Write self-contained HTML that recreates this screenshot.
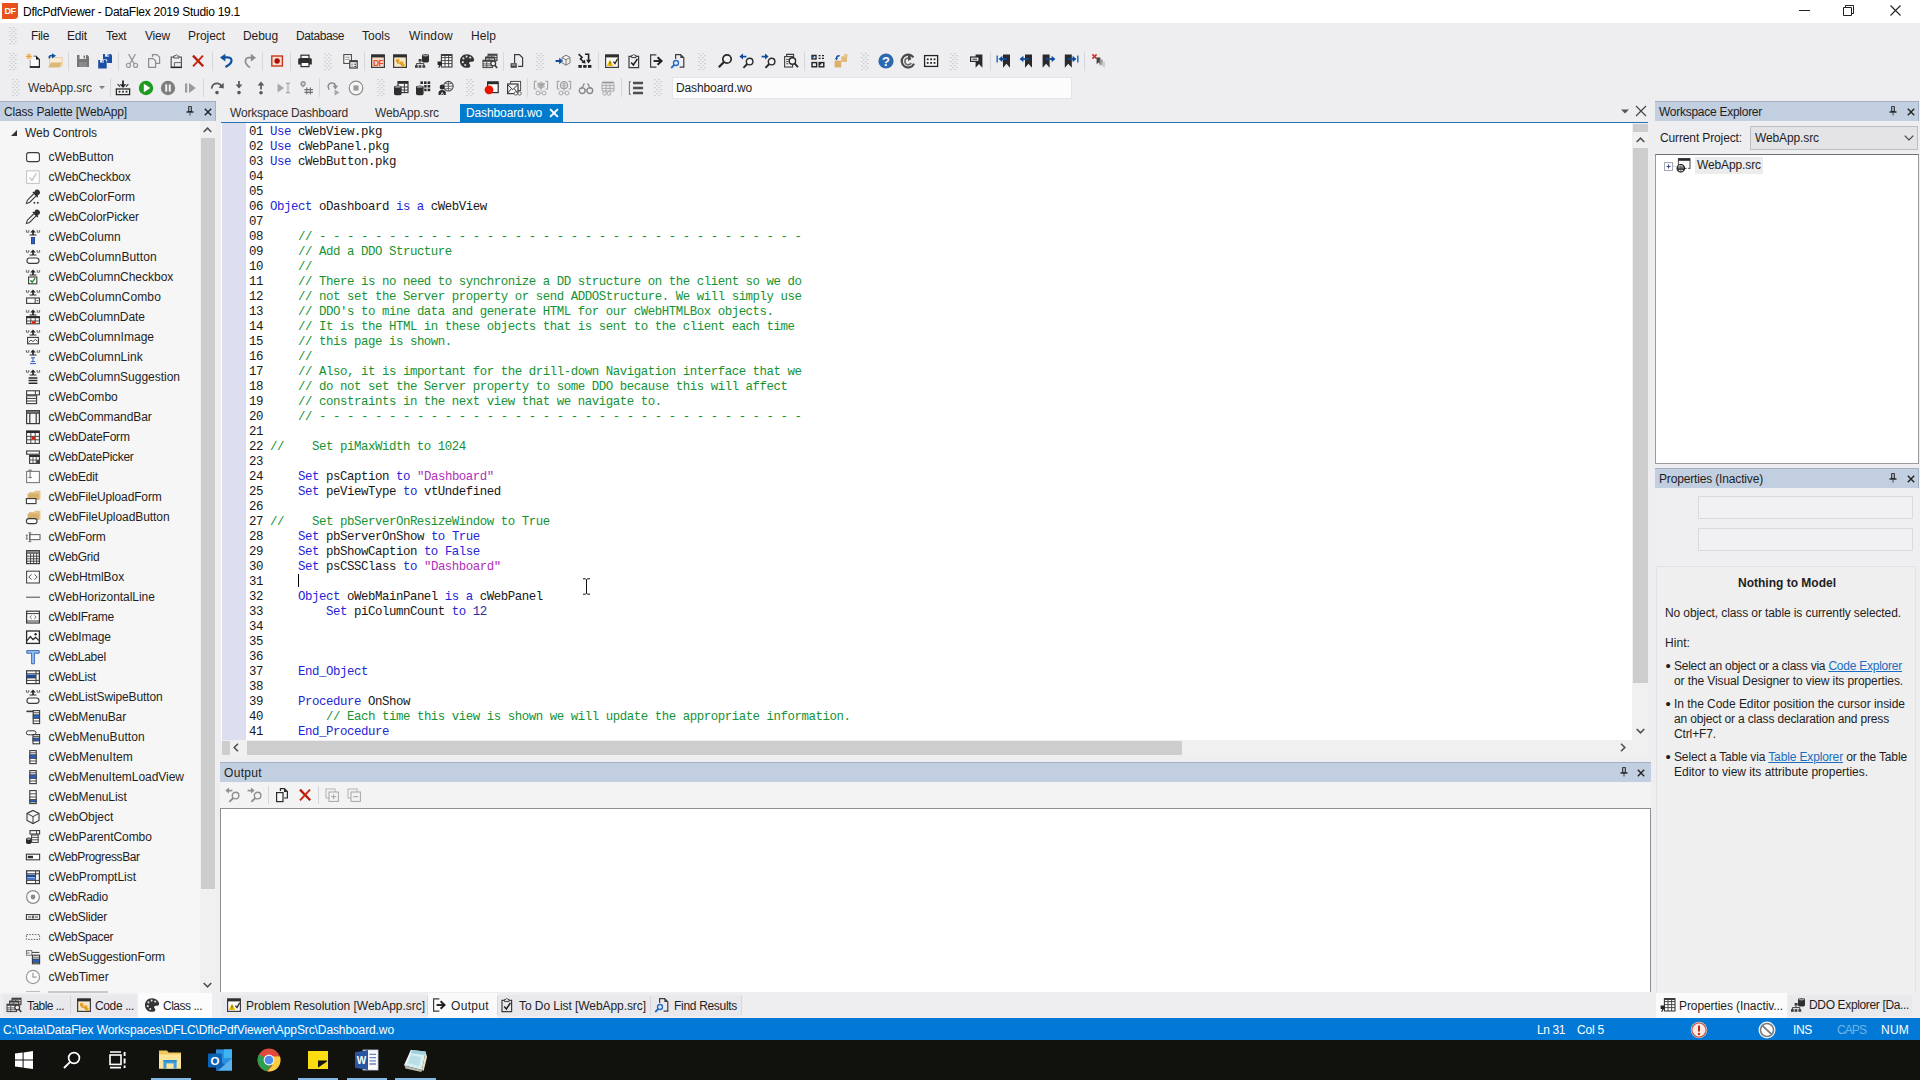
<!DOCTYPE html>
<html lang="en"><head><meta charset="utf-8"><title>DflcPdfViewer - DataFlex 2019 Studio 19.1</title>
<style>
*{margin:0;padding:0;box-sizing:border-box}
html,body{width:1920px;height:1080px;overflow:hidden;background:#eeeef1}
body{position:relative;font-family:"Liberation Sans",sans-serif;font-size:12px;color:#1e1e1e}
body>div,body>svg,.t{position:absolute}
.t{white-space:pre;display:block}
svg{overflow:visible}
a{color:#0e70c0;text-decoration:underline}
</style></head>
<body>
<div style="left:0px;top:0px;width:1920px;height:23px;background:#ffffff;"></div>
<svg style="left:1.0px;top:2.0px;" width="18" height="18" viewBox="0 0 18 18"><path d="M1 1H17V13.5Q17 17 13 17H1Z" fill="#e8501c"/><text x="9" y="12" font-size="9" font-weight="bold" text-anchor="middle" fill="#fff" font-family="Liberation Sans,sans-serif" letter-spacing="-0.5">DF</text></svg>
<span class="t" style="left:23px;top:3.50px;font-size:12px;line-height:16px;color:#000;letter-spacing:-0.266px;">DflcPdfViewer - DataFlex 2019 Studio 19.1</span>
<svg style="left:1799px;top:5px;" width="11" height="11" viewBox="0 0 11 11"><path d="M0 5.5H11" stroke="#222" stroke-width="1" fill="none"/></svg>
<svg style="left:1843px;top:5px;" width="12" height="12" viewBox="0 0 12 12"><path d="M0.5 2.5H8.5V10.5H0.5Z M2.5 2.5V0.5H10.5V8.5H8.5" stroke="#222" stroke-width="1" fill="none"/></svg>
<svg style="left:1890px;top:5px;" width="11" height="11" viewBox="0 0 11 11"><path d="M0.5 0.5L10.5 10.5M10.5 0.5L0.5 10.5" stroke="#222" stroke-width="1.1" fill="none"/></svg>
<div style="left:0px;top:23px;width:1920px;height:79px;background:#eeeef1;"></div>
<svg style="left:9px;top:27px;" width="8" height="17" viewBox="0 0 8 17"><rect x="0" y="0" width="1.6" height="1.2" fill="#cbcbd2"/><rect x="4" y="0" width="1.6" height="1.2" fill="#cbcbd2"/><rect x="2" y="2" width="1.6" height="1.2" fill="#cbcbd2"/><rect x="6" y="2" width="1.6" height="1.2" fill="#cbcbd2"/><rect x="0" y="4" width="1.6" height="1.2" fill="#cbcbd2"/><rect x="4" y="4" width="1.6" height="1.2" fill="#cbcbd2"/><rect x="2" y="6" width="1.6" height="1.2" fill="#cbcbd2"/><rect x="6" y="6" width="1.6" height="1.2" fill="#cbcbd2"/><rect x="0" y="8" width="1.6" height="1.2" fill="#cbcbd2"/><rect x="4" y="8" width="1.6" height="1.2" fill="#cbcbd2"/><rect x="2" y="10" width="1.6" height="1.2" fill="#cbcbd2"/><rect x="6" y="10" width="1.6" height="1.2" fill="#cbcbd2"/><rect x="0" y="12" width="1.6" height="1.2" fill="#cbcbd2"/><rect x="4" y="12" width="1.6" height="1.2" fill="#cbcbd2"/><rect x="2" y="14" width="1.6" height="1.2" fill="#cbcbd2"/><rect x="6" y="14" width="1.6" height="1.2" fill="#cbcbd2"/><rect x="0" y="16" width="1.6" height="1.2" fill="#cbcbd2"/><rect x="4" y="16" width="1.6" height="1.2" fill="#cbcbd2"/></svg>
<span class="t" style="left:31px;top:27.50px;font-size:12px;line-height:16px;color:#1e1e1e;letter-spacing:-0.336px;">File</span>
<span class="t" style="left:67px;top:27.50px;font-size:12px;line-height:16px;color:#1e1e1e;letter-spacing:-0.172px;">Edit</span>
<span class="t" style="left:106px;top:27.50px;font-size:12px;line-height:16px;color:#1e1e1e;letter-spacing:-0.504px;">Text</span>
<span class="t" style="left:145px;top:27.50px;font-size:12px;line-height:16px;color:#1e1e1e;letter-spacing:-0.199px;">View</span>
<span class="t" style="left:188px;top:27.50px;font-size:12px;line-height:16px;color:#1e1e1e;letter-spacing:-0.051px;">Project</span>
<span class="t" style="left:243px;top:27.50px;font-size:12px;line-height:16px;color:#1e1e1e;letter-spacing:-0.075px;">Debug</span>
<span class="t" style="left:296px;top:27.50px;font-size:12px;line-height:16px;color:#1e1e1e;letter-spacing:-0.422px;">Database</span>
<span class="t" style="left:362px;top:27.50px;font-size:12px;line-height:16px;color:#1e1e1e;">Tools</span>
<span class="t" style="left:409px;top:27.50px;font-size:12px;line-height:16px;color:#1e1e1e;letter-spacing:0.219px;">Window</span>
<span class="t" style="left:471px;top:27.50px;font-size:12px;line-height:16px;color:#1e1e1e;letter-spacing:0.078px;">Help</span>
<svg style="left:9px;top:53px;" width="8" height="17" viewBox="0 0 8 17"><rect x="0" y="0" width="1.6" height="1.2" fill="#cbcbd2"/><rect x="4" y="0" width="1.6" height="1.2" fill="#cbcbd2"/><rect x="2" y="2" width="1.6" height="1.2" fill="#cbcbd2"/><rect x="6" y="2" width="1.6" height="1.2" fill="#cbcbd2"/><rect x="0" y="4" width="1.6" height="1.2" fill="#cbcbd2"/><rect x="4" y="4" width="1.6" height="1.2" fill="#cbcbd2"/><rect x="2" y="6" width="1.6" height="1.2" fill="#cbcbd2"/><rect x="6" y="6" width="1.6" height="1.2" fill="#cbcbd2"/><rect x="0" y="8" width="1.6" height="1.2" fill="#cbcbd2"/><rect x="4" y="8" width="1.6" height="1.2" fill="#cbcbd2"/><rect x="2" y="10" width="1.6" height="1.2" fill="#cbcbd2"/><rect x="6" y="10" width="1.6" height="1.2" fill="#cbcbd2"/><rect x="0" y="12" width="1.6" height="1.2" fill="#cbcbd2"/><rect x="4" y="12" width="1.6" height="1.2" fill="#cbcbd2"/><rect x="2" y="14" width="1.6" height="1.2" fill="#cbcbd2"/><rect x="6" y="14" width="1.6" height="1.2" fill="#cbcbd2"/><rect x="0" y="16" width="1.6" height="1.2" fill="#cbcbd2"/><rect x="4" y="16" width="1.6" height="1.2" fill="#cbcbd2"/></svg>
<svg style="left:25.0px;top:53.2px;" width="16" height="16" viewBox="0 0 16 16"><path d="M5.2 6.4V14H14.4V6.2L11.4 3.2H8.4V6.4Z" fill="#fbfbfb"/><path d="M5.2 7V14" stroke="#9a9a9a" stroke-width="1" fill="none" /><path d="M8.6 3.2H11.2" stroke="#555" stroke-width="1" fill="none" /><path d="M14.4 6V14" stroke="#2a2a2a" stroke-width="1.2" fill="none" /><path d="M4.8 14H15" stroke="#111" stroke-width="1.7" fill="none" /><path d="M11 2.6L15 6.6H11Z" fill="#111"/><path d="M0.8 3.4H7M1.8 1.2L6 5.6M6 1.2L1.8 5.6M3.9 0.4V6.4" stroke="#f0a030" stroke-width="1" fill="none" /></svg>
<svg style="left:46.0px;top:53.2px;" width="16" height="16" viewBox="0 0 16 16"><rect x="3.6" y="4.6" width="12.6" height="8.4" fill="#f8ecd8" stroke="#e8cfa0" stroke-width="1"/><path d="M2.2 14.4L5 9.6H16L13.6 14.4Z" fill="#dcb872"/><path d="M3.4 5.4Q2.6 2.2 6.6 2.6" stroke="#0f50a0" stroke-width="1.7" fill="none" /><path d="M6 0.2L10 2.8L6 5.4Z" fill="#0f50a0"/></svg>
<div style="left:68px;top:52px;width:1px;height:19px;background:#d6d6db;"></div>
<svg style="left:75.0px;top:53.2px;" width="16" height="16" viewBox="0 0 16 16"><path d="M2 2H12.5L14 3.5V14H2Z" fill="#767676"/><rect x="4.5" y="2" width="6.5" height="4" fill="#eeeef2"/><rect x="8.5" y="2.6" width="1.6" height="2.8" fill="#767676"/><rect x="4.2" y="9" width="7.6" height="5" fill="#8a8a8a"/></svg>
<svg style="left:97.0px;top:53.2px;" width="16" height="16" viewBox="0 0 16 16"><g transform="translate(6 1) scale(0.9)"><path d="M0 0H8.6L10 1.4V10H0Z" fill="#1a4fa3"/><rect x="2.2" y="0" width="4.6" height="3" fill="#eeeef2"/><rect x="5" y="0.5" width="1.2" height="2" fill="#1a4fa3"/></g><rect x="0.6" y="6.4" width="9.6" height="9.6" fill="#eeeef2"/><g transform="translate(1.2 7) scale(0.85)"><path d="M0 0H8.6L10 1.4V10H0Z" fill="#1a4fa3"/><rect x="2.2" y="0" width="4.6" height="3" fill="#eeeef2"/><rect x="5" y="0.5" width="1.2" height="2" fill="#1a4fa3"/></g></svg>
<div style="left:118px;top:52px;width:1px;height:19px;background:#d6d6db;"></div>
<svg style="left:124.0px;top:53.2px;" width="16" height="16" viewBox="0 0 16 16"><path d="M4.6 1.2L10.2 10.8M11.4 1.2L5.8 10.8" stroke="#9a9a9a" stroke-width="1.3" fill="none" /><circle cx="4.4" cy="12.4" r="2" fill="none" stroke="#9a9a9a" stroke-width="1.2"/><circle cx="11.6" cy="12.4" r="2" fill="none" stroke="#9a9a9a" stroke-width="1.2"/></svg>
<svg style="left:146.0px;top:53.2px;" width="16" height="16" viewBox="0 0 16 16"><path d="M6.5 4V1.6H11L13.6 4.2V10.4H10" stroke="#8c8c8c" stroke-width="1.2" fill="none" /><path d="M2.6 5.6H7.2L9.6 8V14.4H2.6Z" stroke="#8c8c8c" stroke-width="1.2" fill="none" /></svg>
<svg style="left:168.0px;top:53.2px;" width="16" height="16" viewBox="0 0 16 16"><path d="M5.4 4H3.2V14.4H13.4V4H11.2" stroke="#555" stroke-width="1.2" fill="none" /><path d="M5.6 5V3H7Q8.3 0.6 9.6 3H11V5Z" stroke="#555" stroke-width="1" fill="none" /><path d="M2.8 14.4H13.8" stroke="#222" stroke-width="1.4" fill="none" /><path d="M6.4 14V9.6H13" stroke="#666" stroke-width="1" fill="none" /></svg>
<svg style="left:190.0px;top:53.2px;" width="16" height="16" viewBox="0 0 16 16"><path d="M3 2.6L13.2 13.2" stroke="#b81a08" stroke-width="2.3" fill="none" /><path d="M13 2.6L3 13.4" stroke="#c8260f" stroke-width="1.9" fill="none" /></svg>
<div style="left:212px;top:52px;width:1px;height:19px;background:#d6d6db;"></div>
<svg style="left:219.0px;top:53.2px;" width="16" height="16" viewBox="0 0 16 16"><path d="M5 4.4H8.6Q13.2 4.6 12.4 8.4Q11.6 11.4 6.4 14" stroke="#0f50a0" stroke-width="2.2" fill="none" /><path d="M1 4.6L6.4 0.8V8.4Z" fill="#0f50a0"/></svg>
<svg style="left:241.0px;top:53.2px;" width="16" height="16" viewBox="0 0 16 16"><path d="M12 4.6H8Q3.6 5 4.6 9.4Q5.6 12.4 9 14.4" stroke="#8c8c8c" stroke-width="1.7" fill="none" /><path d="M15 4.8L9.8 0.8V8.8Z" fill="#8c8c8c"/></svg>
<div style="left:262px;top:52px;width:1px;height:19px;background:#d6d6db;"></div>
<svg style="left:269.0px;top:53.2px;" width="16" height="16" viewBox="0 0 16 16"><rect x="2.8" y="3" width="10.6" height="10" fill="#f8ddd4" stroke="#c8381e" stroke-width="1.4"/><circle cx="8.1" cy="8" r="2.7" fill="#a81200"/></svg>
<div style="left:290px;top:52px;width:1px;height:19px;background:#d6d6db;"></div>
<svg style="left:297.0px;top:53.2px;" width="16" height="16" viewBox="0 0 16 16"><path d="M1.2 6.4Q1.2 5.2 2.4 5.2H13.6Q14.8 5.2 14.8 6.4V11.4H1.2Z" fill="#2e2e2e"/><rect x="4" y="2.2" width="8" height="3.4" fill="#fafafa" stroke="#2e2e2e" stroke-width="1.2"/><rect x="4" y="9.4" width="8" height="4.2" fill="#fafafa" stroke="#2e2e2e" stroke-width="1.2"/></svg>
<svg style="left:324px;top:53px;" width="8" height="17" viewBox="0 0 8 17"><rect x="0" y="0" width="1.6" height="1.2" fill="#cbcbd2"/><rect x="4" y="0" width="1.6" height="1.2" fill="#cbcbd2"/><rect x="2" y="2" width="1.6" height="1.2" fill="#cbcbd2"/><rect x="6" y="2" width="1.6" height="1.2" fill="#cbcbd2"/><rect x="0" y="4" width="1.6" height="1.2" fill="#cbcbd2"/><rect x="4" y="4" width="1.6" height="1.2" fill="#cbcbd2"/><rect x="2" y="6" width="1.6" height="1.2" fill="#cbcbd2"/><rect x="6" y="6" width="1.6" height="1.2" fill="#cbcbd2"/><rect x="0" y="8" width="1.6" height="1.2" fill="#cbcbd2"/><rect x="4" y="8" width="1.6" height="1.2" fill="#cbcbd2"/><rect x="2" y="10" width="1.6" height="1.2" fill="#cbcbd2"/><rect x="6" y="10" width="1.6" height="1.2" fill="#cbcbd2"/><rect x="0" y="12" width="1.6" height="1.2" fill="#cbcbd2"/><rect x="4" y="12" width="1.6" height="1.2" fill="#cbcbd2"/><rect x="2" y="14" width="1.6" height="1.2" fill="#cbcbd2"/><rect x="6" y="14" width="1.6" height="1.2" fill="#cbcbd2"/><rect x="0" y="16" width="1.6" height="1.2" fill="#cbcbd2"/><rect x="4" y="16" width="1.6" height="1.2" fill="#cbcbd2"/></svg>
<svg style="left:342.0px;top:53.2px;" width="16" height="16" viewBox="0 0 16 16"><rect x="1.8" y="1.6" width="7.6" height="8.8" fill="#fafafa" stroke="#3c3c3c" stroke-width="1"/><path d="M3.4 4.2H7.8M3.4 6.4H7.8" stroke="#777" stroke-width="0.8" fill="none" /><rect x="7.8" y="7.8" width="7.4" height="7.2" fill="#fafafa" stroke="#3c3c3c" stroke-width="1.2"/><rect x="7.8" y="7.6" width="7.4" height="1.6" fill="#3c3c3c"/><path d="M9.2 11.2H11.4M9.2 13.2H11.4" stroke="#666" stroke-width="0.8" fill="none" /><rect x="12.4" y="10.6" width="1.6" height="1.2" fill="#3c3c3c"/><rect x="12.4" y="12.8" width="1.6" height="1.2" fill="#3c3c3c"/></svg>
<div style="left:364px;top:52px;width:1px;height:19px;background:#d6d6db;"></div>
<svg style="left:370.0px;top:53.2px;" width="16" height="16" viewBox="0 0 16 16"><rect x="1.6" y="2" width="12.8" height="12.4" fill="#f6d8c8" stroke="#3c3c3c" stroke-width="1.2"/><rect x="1.6" y="1.6" width="12.8" height="2.8" fill="#2e2e2e"/><text x="8" y="12.6" font-size="8.5" font-weight="bold" text-anchor="middle" fill="#e8501c" font-family="Liberation Sans,sans-serif" letter-spacing="-0.6">DF</text></svg>
<svg style="left:392.0px;top:53.2px;" width="16" height="16" viewBox="0 0 16 16"><rect x="1.6" y="2" width="12.8" height="12.4" fill="#f7e7c8" stroke="#3c3c3c" stroke-width="1.2"/><rect x="1.6" y="1.6" width="12.8" height="2.8" fill="#2e2e2e"/><rect x="4" y="6.2" width="3.4" height="3" fill="#e8a020"/><rect x="7.8" y="8.6" width="3.6" height="3" fill="#e8a020"/><rect x="9.6" y="11.2" width="3" height="2.4" fill="#e8a020"/><path d="M5.6 8.6V10.2H8M9.6 11V12.4" stroke="#c07810" stroke-width="0.8" fill="none" /></svg>
<svg style="left:414.0px;top:53.2px;" width="16" height="16" viewBox="0 0 16 16"><path d="M8 2.5A3.5 1.5 0 0 1 15 2.5V7.9A3.5 1.5 0 0 1 8 7.9Z" fill="#2e2e2e"/><ellipse cx="11.5" cy="2.5" rx="2.8" ry="0.9" fill="#9a9a9a"/><rect x="4.6" y="6" width="3" height="2.6" fill="#3c3c3c"/><path d="M6 8.6V10.6M2.4 12.6V10.6H9.8V12.6" stroke="#3c3c3c" stroke-width="1" fill="none" /><rect x="1" y="12.2" width="2.8" height="2.6" fill="#3c3c3c"/><rect x="4.6" y="12.2" width="2.8" height="2.6" fill="#3c3c3c"/><rect x="8.4" y="12.2" width="2.8" height="2.6" fill="#3c3c3c"/></svg>
<svg style="left:437.0px;top:53.2px;" width="16" height="16" viewBox="0 0 16 16"><rect x="4.4" y="1.6" width="10.6" height="12.4" fill="#fafafa" stroke="#3c3c3c" stroke-width="1.1"/><path d="M4.4 4.6H15M4.4 7.6H15M4.4 10.6H15M8 1.6V14M11.6 1.6V14" stroke="#3c3c3c" stroke-width="0.9" fill="none" /><rect x="4.4" y="1.4" width="10.6" height="1.6" fill="#3c3c3c"/><path d="M0.6 8.6H4.6V13.4L3.4 12.2L2.2 15L1.2 14.6L2.2 12H0.6Z" fill="#222"/></svg>
<svg style="left:459.0px;top:53.2px;" width="16" height="16" viewBox="0 0 16 16"><path d="M8.4 1.2C3.6 1 0.8 4.6 1 8.4C1.2 12.6 4.8 15.2 8.6 14.8C11.4 14.6 12 12.6 10.6 11.2C9.4 10 10.6 8.4 12.4 8.8C14.6 9.2 15.4 7.6 15 6C14.4 3.4 11.8 1.4 8.4 1.2Z" fill="#343434"/><circle cx="4.4" cy="5.4" r="1.1" fill="#d8d8d8"/><circle cx="7.6" cy="3.6" r="1.1" fill="#d8d8d8"/><circle cx="11.2" cy="4.6" r="1.1" fill="#d8d8d8"/><circle cx="3.8" cy="9.2" r="1.1" fill="#d8d8d8"/><circle cx="6.2" cy="12" r="1.1" fill="#d8d8d8"/></svg>
<svg style="left:482.0px;top:53.2px;" width="16" height="16" viewBox="0 0 16 16"><rect x="6" y="1.2" width="9" height="6.5" fill="#f4f4f4" stroke="#3c3c3c" stroke-width="1"/><rect x="6" y="1.2" width="9" height="1.6" fill="#3c3c3c"/><path d="M6 4.45H15M6 6.140000000000001H15M9.6 2.8V7.7" stroke="#3c3c3c" stroke-width="0.8" fill="none" /><rect x="3.6" y="4" width="9" height="6.5" fill="#f4f4f4" stroke="#3c3c3c" stroke-width="1"/><rect x="3.6" y="4" width="9" height="1.6" fill="#3c3c3c"/><path d="M3.6 7.25H12.6M3.6 8.940000000000001H12.6M7.2 5.6V10.5" stroke="#3c3c3c" stroke-width="0.8" fill="none" /><rect x="1" y="7.2" width="9.4" height="7.4" fill="#f4f4f4" stroke="#3c3c3c" stroke-width="1"/><rect x="1" y="7.2" width="9.4" height="1.6" fill="#3c3c3c"/><path d="M1 10.9H10.4M1 12.824000000000002H10.4M4.76 8.8V14.600000000000001" stroke="#3c3c3c" stroke-width="0.8" fill="none" /><circle cx="11.2" cy="10.4" r="2.4" fill="#f4f4f4" stroke="#3c3c3c" stroke-width="1.3"/><path d="M12.8 12.2L15.2 15" stroke="#3c3c3c" stroke-width="1.7" fill="none" /></svg>
<div style="left:503px;top:52px;width:1px;height:19px;background:#d6d6db;"></div>
<svg style="left:509.0px;top:53.2px;" width="16" height="16" viewBox="0 0 16 16"><path d="M5.6 10V1.6H10.4L13.6 4.8V13.4H9" stroke="#3c3c3c" stroke-width="1.2" fill="none" /><rect x="1.6" y="10.2" width="6.2" height="4.6" fill="#444"/><rect x="2.8" y="11.4" width="3.8" height="1.2" fill="#bbb"/></svg>
<svg style="left:536px;top:53px;" width="8" height="17" viewBox="0 0 8 17"><rect x="0" y="0" width="1.6" height="1.2" fill="#cbcbd2"/><rect x="4" y="0" width="1.6" height="1.2" fill="#cbcbd2"/><rect x="2" y="2" width="1.6" height="1.2" fill="#cbcbd2"/><rect x="6" y="2" width="1.6" height="1.2" fill="#cbcbd2"/><rect x="0" y="4" width="1.6" height="1.2" fill="#cbcbd2"/><rect x="4" y="4" width="1.6" height="1.2" fill="#cbcbd2"/><rect x="2" y="6" width="1.6" height="1.2" fill="#cbcbd2"/><rect x="6" y="6" width="1.6" height="1.2" fill="#cbcbd2"/><rect x="0" y="8" width="1.6" height="1.2" fill="#cbcbd2"/><rect x="4" y="8" width="1.6" height="1.2" fill="#cbcbd2"/><rect x="2" y="10" width="1.6" height="1.2" fill="#cbcbd2"/><rect x="6" y="10" width="1.6" height="1.2" fill="#cbcbd2"/><rect x="0" y="12" width="1.6" height="1.2" fill="#cbcbd2"/><rect x="4" y="12" width="1.6" height="1.2" fill="#cbcbd2"/><rect x="2" y="14" width="1.6" height="1.2" fill="#cbcbd2"/><rect x="6" y="14" width="1.6" height="1.2" fill="#cbcbd2"/><rect x="0" y="16" width="1.6" height="1.2" fill="#cbcbd2"/><rect x="4" y="16" width="1.6" height="1.2" fill="#cbcbd2"/></svg>
<svg style="left:555.0px;top:53.2px;" width="16" height="16" viewBox="0 0 16 16"><path d="M0.6 8H5" stroke="#0f4a9c" stroke-width="2" fill="none" /><path d="M4.2 4.8L8 8L4.2 11.2Z" fill="#0f4a9c"/><path d="M11 2.2L15 4.4V9.8L11 12.2L7 9.8V4.4ZM7 4.4L11 6.8L15 4.4M11 6.8V12.2" stroke="#7a7a7a" stroke-width="1" fill="none" /></svg>
<svg style="left:577.0px;top:53.2px;" width="16" height="16" viewBox="0 0 16 16"><path d="M1.6 1.2L5 4.2L3.4 6L7 9.2" stroke="#222" stroke-width="1.6" fill="none" /><path d="M4.6 9.8L8.6 10.6L7.8 6.8Z" fill="#222"/><path d="M8 1.2H11.6V7.6" stroke="#222" stroke-width="1.6" fill="none" /><path d="M9 6.8H14.2L11.6 10.4Z" fill="#222"/><rect x="1.4" y="12" width="3.4" height="2.8" fill="#222"/><rect x="6.2" y="12" width="3.4" height="2.8" fill="#222"/><rect x="11" y="12" width="3.4" height="2.8" fill="#222"/></svg>
<div style="left:598px;top:52px;width:1px;height:19px;background:#d6d6db;"></div>
<svg style="left:604.0px;top:53.2px;" width="16" height="16" viewBox="0 0 16 16"><rect x="1.6" y="2" width="12.8" height="12.4" fill="#fbfbfb" stroke="#3c3c3c" stroke-width="1.2"/><rect x="1.6" y="1.6" width="12.8" height="2.8" fill="#2e2e2e"/><path d="M2.6 13L6 6.4L9.4 13Z" fill="#f2c400"/><path d="M6 8.6V10.8M6 11.6V12.4" stroke="#333" stroke-width="0.9" fill="none" /><path d="M9.4 8.6L11 10.6L13.6 5.8" stroke="#222" stroke-width="1.3" fill="none" /></svg>
<svg style="left:626.0px;top:53.2px;" width="16" height="16" viewBox="0 0 16 16"><path d="M5.4 3.4H3V14.6H12.6V3.4H10.2" stroke="#3c3c3c" stroke-width="1.2" fill="none" /><path d="M5.6 4.6V2.4H6.8Q7.8 0.4 8.8 2.4H10V4.6Z" stroke="#3c3c3c" stroke-width="1" fill="none" /><path d="M5.2 9.4L7.4 12L11.4 5.8" stroke="#1e1e1e" stroke-width="1.5" fill="none" /></svg>
<svg style="left:648.0px;top:53.2px;" width="16" height="16" viewBox="0 0 16 16"><path d="M8.4 1.8H2.6V14.2H8.4" stroke="#3c3c3c" stroke-width="1.2" fill="none" /><path d="M5.6 8H12.6" stroke="#1e1e1e" stroke-width="1.9" fill="none" /><path d="M9.6 4.2L13.6 8L9.6 11.8" stroke="#1e1e1e" stroke-width="1.9" fill="none" /></svg>
<svg style="left:670.0px;top:53.2px;" width="16" height="16" viewBox="0 0 16 16"><path d="M5.6 6V1.6H10.6L13.8 4.8V14.2H9.6" stroke="#3c3c3c" stroke-width="1.2" fill="none" /><path d="M10.4 1.6V5H13.8Z" fill="#3c3c3c"/><circle cx="6" cy="10" r="2.5" fill="#e8f0fa" stroke="#2a6cc0" stroke-width="1.4"/><path d="M4.2 12L1.2 15" stroke="#2a6cc0" stroke-width="1.8" fill="none" /></svg>
<svg style="left:698px;top:53px;" width="8" height="17" viewBox="0 0 8 17"><rect x="0" y="0" width="1.6" height="1.2" fill="#cbcbd2"/><rect x="4" y="0" width="1.6" height="1.2" fill="#cbcbd2"/><rect x="2" y="2" width="1.6" height="1.2" fill="#cbcbd2"/><rect x="6" y="2" width="1.6" height="1.2" fill="#cbcbd2"/><rect x="0" y="4" width="1.6" height="1.2" fill="#cbcbd2"/><rect x="4" y="4" width="1.6" height="1.2" fill="#cbcbd2"/><rect x="2" y="6" width="1.6" height="1.2" fill="#cbcbd2"/><rect x="6" y="6" width="1.6" height="1.2" fill="#cbcbd2"/><rect x="0" y="8" width="1.6" height="1.2" fill="#cbcbd2"/><rect x="4" y="8" width="1.6" height="1.2" fill="#cbcbd2"/><rect x="2" y="10" width="1.6" height="1.2" fill="#cbcbd2"/><rect x="6" y="10" width="1.6" height="1.2" fill="#cbcbd2"/><rect x="0" y="12" width="1.6" height="1.2" fill="#cbcbd2"/><rect x="4" y="12" width="1.6" height="1.2" fill="#cbcbd2"/><rect x="2" y="14" width="1.6" height="1.2" fill="#cbcbd2"/><rect x="6" y="14" width="1.6" height="1.2" fill="#cbcbd2"/><rect x="0" y="16" width="1.6" height="1.2" fill="#cbcbd2"/><rect x="4" y="16" width="1.6" height="1.2" fill="#cbcbd2"/></svg>
<svg style="left:717.0px;top:53.2px;" width="16" height="16" viewBox="0 0 16 16"><circle cx="10" cy="6" r="4.2" fill="#f4f4f4" stroke="#2a2a2a" stroke-width="1.7"/><path d="M7 9L1.8 14.2" stroke="#2a2a2a" stroke-width="2.3" fill="none" /></svg>
<svg style="left:739.0px;top:53.2px;" width="16" height="16" viewBox="0 0 16 16"><circle cx="10.6" cy="8.6" r="3.3" fill="#f4f4f4" stroke="#2a2a2a" stroke-width="1.4"/><path d="M8.2 11L4.4 14.8" stroke="#2a2a2a" stroke-width="1.9" fill="none" /><path d="M2.6 3.6H7.4" stroke="#0f4a9c" stroke-width="1.7" fill="none" /><path d="M0.4 3.6L4 0.6V6.6Z" fill="#0f4a9c"/></svg>
<svg style="left:761.0px;top:53.2px;" width="16" height="16" viewBox="0 0 16 16"><circle cx="10.6" cy="8.6" r="3.3" fill="#f4f4f4" stroke="#2a2a2a" stroke-width="1.4"/><path d="M8.2 11L4.4 14.8" stroke="#2a2a2a" stroke-width="1.9" fill="none" /><path d="M0.6 3.6H5.2" stroke="#0f4a9c" stroke-width="1.7" fill="none" /><path d="M7.6 3.6L4 0.6V6.6Z" fill="#0f4a9c"/></svg>
<svg style="left:783.0px;top:53.2px;" width="16" height="16" viewBox="0 0 16 16"><path d="M3.6 4V1.4H10.6V4" stroke="#3c3c3c" stroke-width="1.1" fill="none" /><rect x="1.6" y="3.6" width="8" height="10.4" fill="#f4f4f4" stroke="#3c3c3c" stroke-width="1.1"/><path d="M3 6.4H6M3 8.6H5.4M3 10.8H5.4" stroke="#3c3c3c" stroke-width="0.9" fill="none" /><circle cx="9.4" cy="8" r="3.2" fill="#f4f4f4" stroke="#2a2a2a" stroke-width="1.4"/><path d="M11.6 10.4L15 14.2" stroke="#2a2a2a" stroke-width="1.9" fill="none" /></svg>
<div style="left:804px;top:52px;width:1px;height:19px;background:#d6d6db;"></div>
<svg style="left:810.0px;top:53.2px;" width="16" height="16" viewBox="0 0 16 16"><rect x="2" y="2.4" width="4" height="3.6" fill="none" stroke="#222" stroke-width="1.3"/><circle cx="3" cy="3.4" r="1.2" fill="#0f4a9c"/><path d="M8.6 2.6H10.6M12 2.6H14M8.6 5.4H10.6M12 5.4H14" stroke="#222" stroke-width="1.3" fill="none" /><rect x="2" y="9.6" width="4.6" height="4.2" fill="none" stroke="#222" stroke-width="1.4"/><rect x="9.2" y="9.6" width="4.6" height="4.2" fill="none" stroke="#222" stroke-width="1.4"/><rect x="9.2" y="9.6" width="2" height="2" fill="#222"/></svg>
<svg style="left:833.0px;top:53.2px;" width="16" height="16" viewBox="0 0 16 16"><rect x="1.6" y="7.6" width="6.6" height="6.8" fill="#dcaf6c"/><rect x="8.2" y="3.4" width="5.8" height="5.6" fill="#e2ba7e"/><rect x="11" y="1" width="3.6" height="3.2" fill="#e8c690"/><path d="M3.4 5.6Q3.4 2.6 6.6 2.8" stroke="#0f4a9c" stroke-width="1.4" fill="none" /><path d="M2 5L3.4 7.4L5 5Z" fill="#0f4a9c"/></svg>
<svg style="left:861px;top:53px;" width="8" height="17" viewBox="0 0 8 17"><rect x="0" y="0" width="1.6" height="1.2" fill="#cbcbd2"/><rect x="4" y="0" width="1.6" height="1.2" fill="#cbcbd2"/><rect x="2" y="2" width="1.6" height="1.2" fill="#cbcbd2"/><rect x="6" y="2" width="1.6" height="1.2" fill="#cbcbd2"/><rect x="0" y="4" width="1.6" height="1.2" fill="#cbcbd2"/><rect x="4" y="4" width="1.6" height="1.2" fill="#cbcbd2"/><rect x="2" y="6" width="1.6" height="1.2" fill="#cbcbd2"/><rect x="6" y="6" width="1.6" height="1.2" fill="#cbcbd2"/><rect x="0" y="8" width="1.6" height="1.2" fill="#cbcbd2"/><rect x="4" y="8" width="1.6" height="1.2" fill="#cbcbd2"/><rect x="2" y="10" width="1.6" height="1.2" fill="#cbcbd2"/><rect x="6" y="10" width="1.6" height="1.2" fill="#cbcbd2"/><rect x="0" y="12" width="1.6" height="1.2" fill="#cbcbd2"/><rect x="4" y="12" width="1.6" height="1.2" fill="#cbcbd2"/><rect x="2" y="14" width="1.6" height="1.2" fill="#cbcbd2"/><rect x="6" y="14" width="1.6" height="1.2" fill="#cbcbd2"/><rect x="0" y="16" width="1.6" height="1.2" fill="#cbcbd2"/><rect x="4" y="16" width="1.6" height="1.2" fill="#cbcbd2"/></svg>
<svg style="left:878.0px;top:53.2px;" width="16" height="16" viewBox="0 0 16 16"><circle cx="8" cy="8" r="7.6" fill="#2d69b0"/><text x="8" y="12.8" font-size="13" font-weight="bold" text-anchor="middle" fill="#fff" font-family="Liberation Sans,sans-serif">?</text></svg>
<svg style="left:900.0px;top:53.2px;" width="16" height="16" viewBox="0 0 16 16"><path d="M13.4 4.4A6.4 6.4 0 1 0 14 10.6" stroke="#4a4a4a" stroke-width="2.2" fill="none" /><path d="M11 6.4A3.4 3.4 0 1 0 11.2 10" stroke="#6a6a6a" stroke-width="1.6" fill="none" /><path d="M8 1.4H10.6V6.6L8 8Z" fill="#4a4a4a"/></svg>
<svg style="left:923.0px;top:53.2px;" width="16" height="16" viewBox="0 0 16 16"><rect x="1.6" y="2.6" width="13" height="10.8" fill="#f8f8f8" stroke="#222" stroke-width="1.3"/><rect x="3.8" y="5.4" width="1.8" height="1.8" fill="#222"/><rect x="3.8" y="9" width="1.8" height="1.8" fill="#222"/><rect x="7.2" y="5.4" width="1.8" height="1.8" fill="#222"/><rect x="7.2" y="9" width="1.8" height="1.8" fill="#222"/><rect x="10.6" y="5.4" width="1.8" height="1.8" fill="#222"/><rect x="10.6" y="9" width="1.8" height="1.8" fill="#222"/></svg>
<svg style="left:950px;top:53px;" width="8" height="17" viewBox="0 0 8 17"><rect x="0" y="0" width="1.6" height="1.2" fill="#cbcbd2"/><rect x="4" y="0" width="1.6" height="1.2" fill="#cbcbd2"/><rect x="2" y="2" width="1.6" height="1.2" fill="#cbcbd2"/><rect x="6" y="2" width="1.6" height="1.2" fill="#cbcbd2"/><rect x="0" y="4" width="1.6" height="1.2" fill="#cbcbd2"/><rect x="4" y="4" width="1.6" height="1.2" fill="#cbcbd2"/><rect x="2" y="6" width="1.6" height="1.2" fill="#cbcbd2"/><rect x="6" y="6" width="1.6" height="1.2" fill="#cbcbd2"/><rect x="0" y="8" width="1.6" height="1.2" fill="#cbcbd2"/><rect x="4" y="8" width="1.6" height="1.2" fill="#cbcbd2"/><rect x="2" y="10" width="1.6" height="1.2" fill="#cbcbd2"/><rect x="6" y="10" width="1.6" height="1.2" fill="#cbcbd2"/><rect x="0" y="12" width="1.6" height="1.2" fill="#cbcbd2"/><rect x="4" y="12" width="1.6" height="1.2" fill="#cbcbd2"/><rect x="2" y="14" width="1.6" height="1.2" fill="#cbcbd2"/><rect x="6" y="14" width="1.6" height="1.2" fill="#cbcbd2"/><rect x="0" y="16" width="1.6" height="1.2" fill="#cbcbd2"/><rect x="4" y="16" width="1.6" height="1.2" fill="#cbcbd2"/></svg>
<svg style="left:969.0px;top:53.2px;" width="16" height="16" viewBox="0 0 16 16"><path d="M6.6 1.4H13.4V14.8L10 11L6.6 14.8Z" fill="#2a2a2a"/><rect x="1.6" y="4" width="8.4" height="4.4" fill="#f2f2f2" stroke="#2a2a2a" stroke-width="1.2"/><path d="M3.4 6.2H8" stroke="#2a2a2a" stroke-width="1" fill="none" /></svg>
<div style="left:990px;top:52px;width:1px;height:19px;background:#d6d6db;"></div>
<svg style="left:996.0px;top:53.2px;" width="16" height="16" viewBox="0 0 16 16"><path d="M7 1.6H14V14.8L10.5 10.8L7 14.8Z" fill="#2a2a2a"/><path d="M1.2 2.6V9.4" stroke="#2a6cc0" stroke-width="1.5" fill="none" /><path d="M5.4 6H11" stroke="#0f4a9c" stroke-width="1.8" fill="none" /><path d="M2.6 6L6.4 2.8V9.2Z" fill="#0f4a9c"/></svg>
<svg style="left:1019.0px;top:53.2px;" width="16" height="16" viewBox="0 0 16 16"><path d="M6 1.6H13V14.8L9.5 10.8L6 14.8Z" fill="#2a2a2a"/><path d="M3.4 6H10" stroke="#0f4a9c" stroke-width="1.8" fill="none" /><path d="M0.6 6L4.4 2.8V9.2Z" fill="#0f4a9c"/></svg>
<svg style="left:1040.0px;top:53.2px;" width="16" height="16" viewBox="0 0 16 16"><path d="M2.6 1.6H9.6V14.8L6.1 10.8L2.6 14.8Z" fill="#2a2a2a"/><path d="M6 6H12" stroke="#0f4a9c" stroke-width="1.8" fill="none" /><path d="M15.4 6L11.6 2.8V9.2Z" fill="#0f4a9c"/></svg>
<svg style="left:1063.0px;top:53.2px;" width="16" height="16" viewBox="0 0 16 16"><path d="M1.8 1.6H8.8V14.8L5.3 10.8L1.8 14.8Z" fill="#2a2a2a"/><path d="M14.8 2.6V9.4" stroke="#2a6cc0" stroke-width="1.5" fill="none" /><path d="M5 6H10.6" stroke="#0f4a9c" stroke-width="1.8" fill="none" /><path d="M13.4 6L9.6 2.8V9.2Z" fill="#0f4a9c"/></svg>
<div style="left:1084px;top:52px;width:1px;height:19px;background:#d6d6db;"></div>
<svg style="left:1091.0px;top:53.2px;" width="16" height="16" viewBox="0 0 16 16"><path d="M1.4 1.4L5.6 5.6M5.6 1.4L1.4 5.6" stroke="#d03020" stroke-width="1.5" fill="none" /><path d="M5.6 4.4H9.4V11.2L7.5 9.4L5.6 11.2Z" fill="#444"/><path d="M8.6 6.6H11.8V13L10.2 11.4L8.6 13Z" fill="#9a9a9a"/><path d="M11.4 8.8H14V14.8L12.7 13.4L11.4 14.8Z" fill="#cfcfcf"/></svg>
<svg style="left:12px;top:79px;" width="8" height="17" viewBox="0 0 8 17"><rect x="0" y="0" width="1.6" height="1.2" fill="#cbcbd2"/><rect x="4" y="0" width="1.6" height="1.2" fill="#cbcbd2"/><rect x="2" y="2" width="1.6" height="1.2" fill="#cbcbd2"/><rect x="6" y="2" width="1.6" height="1.2" fill="#cbcbd2"/><rect x="0" y="4" width="1.6" height="1.2" fill="#cbcbd2"/><rect x="4" y="4" width="1.6" height="1.2" fill="#cbcbd2"/><rect x="2" y="6" width="1.6" height="1.2" fill="#cbcbd2"/><rect x="6" y="6" width="1.6" height="1.2" fill="#cbcbd2"/><rect x="0" y="8" width="1.6" height="1.2" fill="#cbcbd2"/><rect x="4" y="8" width="1.6" height="1.2" fill="#cbcbd2"/><rect x="2" y="10" width="1.6" height="1.2" fill="#cbcbd2"/><rect x="6" y="10" width="1.6" height="1.2" fill="#cbcbd2"/><rect x="0" y="12" width="1.6" height="1.2" fill="#cbcbd2"/><rect x="4" y="12" width="1.6" height="1.2" fill="#cbcbd2"/><rect x="2" y="14" width="1.6" height="1.2" fill="#cbcbd2"/><rect x="6" y="14" width="1.6" height="1.2" fill="#cbcbd2"/><rect x="0" y="16" width="1.6" height="1.2" fill="#cbcbd2"/><rect x="4" y="16" width="1.6" height="1.2" fill="#cbcbd2"/></svg>
<span class="t" style="left:28px;top:79.50px;font-size:12px;line-height:16px;color:#333;letter-spacing:-0.114px;">WebApp.src</span>
<svg style="left:98.5px;top:85.5px;" width="6" height="3.2" viewBox="0 0 6 3.2"><path d="M0 0H6L3 3.2Z" fill="#808080"/></svg>
<div style="left:110px;top:78px;width:1px;height:19px;background:#d6d6db;"></div>
<svg style="left:115.0px;top:79.5px;" width="16" height="16" viewBox="0 0 16 16"><path d="M8 0.6V5" stroke="#2a2a2a" stroke-width="1.8" fill="none" /><path d="M4.6 4.2H11.4L8 8Z" fill="#2a2a2a"/><path d="M2.6 4L5 6.6M13.4 4L11 6.6" stroke="#2a2a2a" stroke-width="1.1" fill="none" /><rect x="1.4" y="9" width="13.2" height="5.6" fill="#fafafa" stroke="#2a2a2a" stroke-width="1.3"/><rect x="3.6" y="10.8" width="1.8" height="1.8" fill="#2a2a2a"/><rect x="7.1" y="10.8" width="1.8" height="1.8" fill="#2a2a2a"/><rect x="10.6" y="10.8" width="1.8" height="1.8" fill="#2a2a2a"/></svg>
<svg style="left:138.0px;top:79.5px;" width="16" height="16" viewBox="0 0 16 16"><circle cx="8" cy="8" r="7.2" fill="#1f9a1f"/><path d="M5.8 3.8L12.4 8L5.8 12.2Z" fill="#fff"/></svg>
<svg style="left:160.0px;top:79.5px;" width="16" height="16" viewBox="0 0 16 16"><circle cx="8" cy="8" r="7.2" fill="#7e7e7e"/><rect x="5.2" y="4.4" width="2" height="7.2" fill="#f2f2f2"/><rect x="8.8" y="4.4" width="2" height="7.2" fill="#f2f2f2"/></svg>
<svg style="left:182.0px;top:79.5px;" width="16" height="16" viewBox="0 0 16 16"><rect x="3" y="3.4" width="2.2" height="9.2" fill="#9a9a9a"/><path d="M7 3L13.8 8L7 13Z" fill="#9a9a9a"/></svg>
<div style="left:203px;top:78px;width:1px;height:19px;background:#d6d6db;"></div>
<svg style="left:209.0px;top:79.5px;" width="16" height="16" viewBox="0 0 16 16"><path d="M2.6 8.6Q3.4 3.2 8.6 3.4Q11.6 3.8 12.4 6.4" stroke="#585858" stroke-width="1.7" fill="none" /><path d="M9.4 7.6L14.6 2.8L14.8 8.6Z" fill="#585858"/><circle cx="8" cy="12.6" r="1.8" fill="#585858"/></svg>
<svg style="left:231.0px;top:79.5px;" width="16" height="16" viewBox="0 0 16 16"><path d="M8 1V6" stroke="#585858" stroke-width="1.7" fill="none" /><path d="M4.6 4.6H11.4L8 8.6Z" fill="#585858"/><circle cx="8" cy="12.6" r="1.8" fill="#585858"/></svg>
<svg style="left:253.0px;top:79.5px;" width="16" height="16" viewBox="0 0 16 16"><path d="M8 4V9.4" stroke="#585858" stroke-width="1.7" fill="none" /><path d="M4.6 5.6H11.4L8 1.4Z" fill="#585858"/><circle cx="8" cy="12.8" r="1.8" fill="#585858"/></svg>
<svg style="left:276.0px;top:79.5px;" width="16" height="16" viewBox="0 0 16 16"><path d="M1.6 3.4L8 8L1.6 12.6Z" fill="#a6a6a6"/><path d="M10 3.4H14M12 3.4V12.6M10 12.6H14" stroke="#a6a6a6" stroke-width="1.1" fill="none" /></svg>
<svg style="left:298.0px;top:79.5px;" width="16" height="16" viewBox="0 0 16 16"><path d="M3 4.4Q3 1.4 5.6 1.6Q7.6 2 7 4.8L5 6.6Z" stroke="#8e8e8e" stroke-width="1.2" fill="#c8c8c8" /><path d="M6.4 9.6H15M6.4 12.4H15M8.8 7.4V14.6M12.4 7.4V14.6" stroke="#707070" stroke-width="1.1" fill="none" /></svg>
<div style="left:319px;top:78px;width:1px;height:19px;background:#d6d6db;"></div>
<svg style="left:325.0px;top:79.5px;" width="16" height="16" viewBox="0 0 16 16"><path d="M4 9.6Q1.6 4.6 6 3Q10.4 2.4 10.4 7" stroke="#8e8e8e" stroke-width="1.6" fill="none" /><path d="M7.6 5.8L13.2 5.4L10.4 9.6Z" fill="#8e8e8e"/><path d="M9.6 9.8L14.6 12.6L9.6 15.4Z" fill="#a6a6a6"/></svg>
<svg style="left:348.0px;top:79.5px;" width="16" height="16" viewBox="0 0 16 16"><circle cx="8" cy="8" r="6.8" fill="#f6f6f6" stroke="#8e8e8e" stroke-width="1.2"/><rect x="5.4" y="5.4" width="5.2" height="5.2" fill="#9a9a9a"/></svg>
<svg style="left:377px;top:79px;" width="8" height="17" viewBox="0 0 8 17"><rect x="0" y="0" width="1.6" height="1.2" fill="#cbcbd2"/><rect x="4" y="0" width="1.6" height="1.2" fill="#cbcbd2"/><rect x="2" y="2" width="1.6" height="1.2" fill="#cbcbd2"/><rect x="6" y="2" width="1.6" height="1.2" fill="#cbcbd2"/><rect x="0" y="4" width="1.6" height="1.2" fill="#cbcbd2"/><rect x="4" y="4" width="1.6" height="1.2" fill="#cbcbd2"/><rect x="2" y="6" width="1.6" height="1.2" fill="#cbcbd2"/><rect x="6" y="6" width="1.6" height="1.2" fill="#cbcbd2"/><rect x="0" y="8" width="1.6" height="1.2" fill="#cbcbd2"/><rect x="4" y="8" width="1.6" height="1.2" fill="#cbcbd2"/><rect x="2" y="10" width="1.6" height="1.2" fill="#cbcbd2"/><rect x="6" y="10" width="1.6" height="1.2" fill="#cbcbd2"/><rect x="0" y="12" width="1.6" height="1.2" fill="#cbcbd2"/><rect x="4" y="12" width="1.6" height="1.2" fill="#cbcbd2"/><rect x="2" y="14" width="1.6" height="1.2" fill="#cbcbd2"/><rect x="6" y="14" width="1.6" height="1.2" fill="#cbcbd2"/><rect x="0" y="16" width="1.6" height="1.2" fill="#cbcbd2"/><rect x="4" y="16" width="1.6" height="1.2" fill="#cbcbd2"/></svg>
<svg style="left:393.0px;top:79.5px;" width="16" height="16" viewBox="0 0 16 16"><rect x="5" y="1.6" width="10" height="11" fill="#f4f4f4" stroke="#2a2a2a" stroke-width="1.1"/><rect x="5" y="1.4" width="10" height="2.4" fill="#2a2a2a"/><path d="M5 7H15M5 10H15M11.4 3.8V12.6" stroke="#2a2a2a" stroke-width="0.9" fill="none" /><path d="M1 6.9A3.8 1.5 0 0 1 8.6 6.9V13.700000000000001A3.8 1.5 0 0 1 1 13.700000000000001Z" fill="#2e2e2e"/><ellipse cx="4.8" cy="6.9" rx="3.0999999999999996" ry="0.9" fill="#9a9a9a"/></svg>
<svg style="left:415.0px;top:79.5px;" width="16" height="16" viewBox="0 0 16 16"><rect x="5.4" y="1.4" width="2.6" height="2.6" fill="#2a2a2a"/><rect x="5.4" y="5" width="2.6" height="2.6" fill="#2a2a2a"/><rect x="5.4" y="8.6" width="2.6" height="2.6" fill="#2a2a2a"/><rect x="9" y="1.4" width="2.6" height="2.6" fill="#2a2a2a"/><rect x="9" y="5" width="2.6" height="2.6" fill="#2a2a2a"/><rect x="9" y="8.6" width="2.6" height="2.6" fill="#2a2a2a"/><rect x="12.6" y="1.4" width="2.6" height="2.6" fill="#2a2a2a"/><rect x="12.6" y="5" width="2.6" height="2.6" fill="#2a2a2a"/><rect x="12.6" y="8.6" width="2.6" height="2.6" fill="#2a2a2a"/><rect x="0.6" y="4.6" width="8.6" height="11" fill="#eeeef2"/><path d="M1 6.9A3.8 1.5 0 0 1 8.6 6.9V13.700000000000001A3.8 1.5 0 0 1 1 13.700000000000001Z" fill="#2e2e2e"/><ellipse cx="4.8" cy="6.9" rx="3.0999999999999996" ry="0.9" fill="#9a9a9a"/></svg>
<svg style="left:438.0px;top:79.5px;" width="16" height="16" viewBox="0 0 16 16"><circle cx="10.4" cy="6.2" r="4.8" fill="#f2f2f2" stroke="#4a4a4a" stroke-width="1.1"/><path d="M5.6 6.2H15.2M10.4 1.4V11M7 3.2Q10.4 5 13.8 3.2M7 9.2Q10.4 7.4 13.8 9.2" stroke="#4a4a4a" stroke-width="0.8" fill="none" /><circle cx="4.2" cy="7" r="2.5" fill="#2a2a2a"/><path d="M0.6 15V12.6Q1 10 4.2 10Q7.4 10 7.8 12.6V15Z" fill="#2a2a2a"/><path d="M2.8 15L4.2 12.4L5.6 15" stroke="#eeeef2" stroke-width="0.9" fill="none" /></svg>
<svg style="left:466px;top:79px;" width="8" height="17" viewBox="0 0 8 17"><rect x="0" y="0" width="1.6" height="1.2" fill="#cbcbd2"/><rect x="4" y="0" width="1.6" height="1.2" fill="#cbcbd2"/><rect x="2" y="2" width="1.6" height="1.2" fill="#cbcbd2"/><rect x="6" y="2" width="1.6" height="1.2" fill="#cbcbd2"/><rect x="0" y="4" width="1.6" height="1.2" fill="#cbcbd2"/><rect x="4" y="4" width="1.6" height="1.2" fill="#cbcbd2"/><rect x="2" y="6" width="1.6" height="1.2" fill="#cbcbd2"/><rect x="6" y="6" width="1.6" height="1.2" fill="#cbcbd2"/><rect x="0" y="8" width="1.6" height="1.2" fill="#cbcbd2"/><rect x="4" y="8" width="1.6" height="1.2" fill="#cbcbd2"/><rect x="2" y="10" width="1.6" height="1.2" fill="#cbcbd2"/><rect x="6" y="10" width="1.6" height="1.2" fill="#cbcbd2"/><rect x="0" y="12" width="1.6" height="1.2" fill="#cbcbd2"/><rect x="4" y="12" width="1.6" height="1.2" fill="#cbcbd2"/><rect x="2" y="14" width="1.6" height="1.2" fill="#cbcbd2"/><rect x="6" y="14" width="1.6" height="1.2" fill="#cbcbd2"/><rect x="0" y="16" width="1.6" height="1.2" fill="#cbcbd2"/><rect x="4" y="16" width="1.6" height="1.2" fill="#cbcbd2"/></svg>
<svg style="left:483.0px;top:79.5px;" width="16" height="16" viewBox="0 0 16 16"><rect x="4.6" y="2" width="10.6" height="10.6" fill="#fbfbfb" stroke="#2a2a2a" stroke-width="1.2"/><rect x="4.6" y="1.6" width="10.6" height="2.6" fill="#2a2a2a"/><circle cx="6" cy="9.8" r="4.4" fill="#e81400"/></svg>
<svg style="left:506.0px;top:79.5px;" width="16" height="16" viewBox="0 0 16 16"><rect x="4.6" y="1.4" width="10" height="9" fill="#f6f6f6" stroke="#4a4a4a" stroke-width="1"/><rect x="1.6" y="4" width="10.4" height="9.6" fill="#f6f6f6" stroke="#3a3a3a" stroke-width="1.2"/><path d="M1.6 4.6L6.8 9.6L12 4.6M1.6 13.2L5.4 8.6M12 13.2L8.2 8.6" stroke="#3a3a3a" stroke-width="1" fill="none" /><circle cx="9.8" cy="13.4" r="1.7" fill="#f6f6f6" stroke="#5a5a5a" stroke-width="0.9"/><circle cx="13.6" cy="13.4" r="1.7" fill="#f6f6f6" stroke="#5a5a5a" stroke-width="0.9"/></svg>
<div style="left:527px;top:78px;width:1px;height:19px;background:#d6d6db;"></div>
<svg style="left:533.0px;top:79.5px;" width="16" height="16" viewBox="0 0 16 16"><path d="M3.6 1.4H1.4V9H3.6M12.4 1.4H14.6V9H12.4" stroke="#a8a8a8" stroke-width="1.2" fill="none" /><path d="M8 1.6L11.6 3.4V7.2L8 9L4.4 7.2V3.4Z" fill="#b8b8b8"/><path d="M4.4 3.4L8 5.2L11.6 3.4M8 5.2V9" stroke="#8e8e8e" stroke-width="0.8" fill="none" /><path d="M8 9V11" stroke="#a8a8a8" stroke-width="1" fill="none" /><circle cx="5" cy="13" r="2" fill="none" stroke="#a8a8a8" stroke-width="1"/><circle cx="11" cy="13" r="2" fill="none" stroke="#a8a8a8" stroke-width="1"/><path d="M7 13H9" stroke="#a8a8a8" stroke-width="1" fill="none" /></svg>
<svg style="left:556.0px;top:79.5px;" width="16" height="16" viewBox="0 0 16 16"><path d="M3.6 1.4H1.4V9H3.6M12.4 1.4H14.6V9H12.4" stroke="#a8a8a8" stroke-width="1.2" fill="none" /><circle cx="8" cy="5.2" r="3.8" fill="none" stroke="#9a9a9a" stroke-width="1"/><path d="M4.2 5.2H11.8M8 1.4V9M5.4 3Q8 4.2 10.6 3M5.4 7.4Q8 6.2 10.6 7.4" stroke="#9a9a9a" stroke-width="0.7" fill="none" /><path d="M8 9V11" stroke="#a8a8a8" stroke-width="1" fill="none" /><circle cx="5" cy="13" r="2" fill="none" stroke="#a8a8a8" stroke-width="1"/><circle cx="11" cy="13" r="2" fill="none" stroke="#a8a8a8" stroke-width="1"/><path d="M7 13H9" stroke="#a8a8a8" stroke-width="1" fill="none" /></svg>
<svg style="left:578.0px;top:79.5px;" width="16" height="16" viewBox="0 0 16 16"><path d="M3.4 9L6.4 3.4M12.6 9L9.6 3.4" stroke="#8a8a8a" stroke-width="1.2" fill="none" /><circle cx="4.2" cy="10.6" r="2.9" fill="none" stroke="#8a8a8a" stroke-width="1.4"/><circle cx="11.8" cy="10.6" r="2.9" fill="none" stroke="#8a8a8a" stroke-width="1.4"/><path d="M7 10.2Q8 9.4 9 10.2" stroke="#8a8a8a" stroke-width="1.2" fill="none" /></svg>
<svg style="left:600.0px;top:79.5px;" width="16" height="16" viewBox="0 0 16 16"><rect x="2" y="1.6" width="12" height="1.8" fill="#9a9a9a"/><path d="M2 5.6H14M2 8.4H14M2 11H14M6 3.4V11M10 3.4V11M2 3.4V11M14 3.4V11" stroke="#a8a8a8" stroke-width="1" fill="none" /><circle cx="4.6" cy="13.4" r="1.8" fill="#eeeef2" stroke="#a8a8a8" stroke-width="1"/><circle cx="9" cy="13.4" r="1.8" fill="#eeeef2" stroke="#a8a8a8" stroke-width="1"/></svg>
<div style="left:621px;top:78px;width:1px;height:19px;background:#d6d6db;"></div>
<svg style="left:628.0px;top:79.5px;" width="16" height="16" viewBox="0 0 16 16"><path d="M5 3H15M5 8H15M5 13H15" stroke="#4e4e4e" stroke-width="2.6" fill="none" /><path d="M3 1.8H1.4V14.2H3" stroke="#7a7a7a" stroke-width="1.1" fill="none" /></svg>
<svg style="left:654px;top:79px;" width="8" height="17" viewBox="0 0 8 17"><rect x="0" y="0" width="1.6" height="1.2" fill="#cbcbd2"/><rect x="4" y="0" width="1.6" height="1.2" fill="#cbcbd2"/><rect x="2" y="2" width="1.6" height="1.2" fill="#cbcbd2"/><rect x="6" y="2" width="1.6" height="1.2" fill="#cbcbd2"/><rect x="0" y="4" width="1.6" height="1.2" fill="#cbcbd2"/><rect x="4" y="4" width="1.6" height="1.2" fill="#cbcbd2"/><rect x="2" y="6" width="1.6" height="1.2" fill="#cbcbd2"/><rect x="6" y="6" width="1.6" height="1.2" fill="#cbcbd2"/><rect x="0" y="8" width="1.6" height="1.2" fill="#cbcbd2"/><rect x="4" y="8" width="1.6" height="1.2" fill="#cbcbd2"/><rect x="2" y="10" width="1.6" height="1.2" fill="#cbcbd2"/><rect x="6" y="10" width="1.6" height="1.2" fill="#cbcbd2"/><rect x="0" y="12" width="1.6" height="1.2" fill="#cbcbd2"/><rect x="4" y="12" width="1.6" height="1.2" fill="#cbcbd2"/><rect x="2" y="14" width="1.6" height="1.2" fill="#cbcbd2"/><rect x="6" y="14" width="1.6" height="1.2" fill="#cbcbd2"/><rect x="0" y="16" width="1.6" height="1.2" fill="#cbcbd2"/><rect x="4" y="16" width="1.6" height="1.2" fill="#cbcbd2"/></svg>
<div style="left:672px;top:77px;width:400px;height:22px;background:#fcfcfc;border:1px solid #e3e3e8;"></div>
<span class="t" style="left:676px;top:79.50px;font-size:12px;line-height:16px;color:#1e1e1e;letter-spacing:-0.116px;">Dashboard.wo</span>
<div style="left:0px;top:121px;width:216px;height:872px;background:#f6f6f6;"></div>
<div style="left:0px;top:101px;width:216px;height:20px;background:#c1cfe0;border-top:1px solid #a4b0c4;border-right:1px solid #a4b0c4;"></div>
<span class="t" style="left:4px;top:103.50px;font-size:12px;line-height:16px;color:#1e1e1e;letter-spacing:-0.160px;">Class Palette [WebApp]</span>
<svg style="left:186px;top:106.0px;" width="8" height="10" viewBox="0 0 8 10"><path d="M2.5 0.5H5.5V5.5H2.5Z" fill="#9aa3b2" stroke="#222" stroke-width="0.8"/><path d="M0.5 6H7.5" stroke="#111" stroke-width="1.3"/><path d="M4 6.5V9.5" stroke="#444" stroke-width="1"/></svg>
<svg style="left:203px;top:106.5px;" width="10" height="10" viewBox="0 0 10 10"><path d="M1.7999999999999998 1.7999999999999998L8.2 8.2M8.2 1.7999999999999998L1.7999999999999998 8.2" stroke="#222" stroke-width="1.4" fill="none"/></svg>
<svg style="left:10px;top:129px;" width="8" height="8" viewBox="0 0 8 8"><path d="M7 1V7H1Z" fill="#333"/></svg>
<span class="t" style="left:25px;top:125.00px;font-size:12px;line-height:16px;color:#1e1e1e;letter-spacing:-0.040px;">Web Controls</span>
<svg style="left:25.0px;top:148.5px;" width="16" height="16" viewBox="0 0 16 16"><rect x="1.6" y="3.6" width="12.8" height="9" fill="#fdfdfd" stroke="#3a3a3a" stroke-width="1.1" rx="2.2"/></svg>
<span class="t" style="left:48.4px;top:148.50px;font-size:12px;line-height:16px;color:#1e1e1e;letter-spacing:0.004px;">cWebButton</span>
<svg style="left:25.0px;top:168.5px;" width="16" height="16" viewBox="0 0 16 16"><rect x="1.6" y="1.8" width="12.6" height="12.6" fill="#fdfdfd" stroke="#c2c2c2" stroke-width="1"/><path d="M4.6 8.4L7 11.4L11.4 4.4" stroke="#c2c2c2" stroke-width="1.3" fill="none" /></svg>
<span class="t" style="left:48.4px;top:168.50px;font-size:12px;line-height:16px;color:#1e1e1e;letter-spacing:-0.136px;">cWebCheckbox</span>
<svg style="left:25.0px;top:188.5px;" width="16" height="16" viewBox="0 0 16 16"><path d="M10.6 0.8Q12.6 -0.2 14.2 1.6Q15.8 3.4 14.6 5L12.6 6.6L13.2 7.4L12.2 8.4L7.4 3.6L8.4 2.6L9.2 3.2Z" fill="#2e2e2e"/><path d="M8.6 5L2.4 11.2L1.4 14.4L4.6 13.4L10.8 7.2" stroke="#3a3a3a" stroke-width="1.1" fill="none" /><rect x="8.6" y="13" width="1.6" height="1.6" fill="#2e2e2e"/><rect x="12" y="13" width="1.6" height="1.6" fill="#2e2e2e"/></svg>
<span class="t" style="left:48.4px;top:188.50px;font-size:12px;line-height:16px;color:#1e1e1e;letter-spacing:-0.034px;">cWebColorForm</span>
<svg style="left:25.0px;top:208.5px;" width="16" height="16" viewBox="0 0 16 16"><path d="M10.6 0.8Q12.6 -0.2 14.2 1.6Q15.8 3.4 14.6 5L12.6 6.6L13.2 7.4L12.2 8.4L7.4 3.6L8.4 2.6L9.2 3.2Z" fill="#2e2e2e"/><path d="M8.6 5L2.4 11.2L1.4 14.4L4.6 13.4L10.8 7.2" stroke="#3a3a3a" stroke-width="1.1" fill="none" /></svg>
<span class="t" style="left:48.4px;top:208.50px;font-size:12px;line-height:16px;color:#1e1e1e;letter-spacing:-0.139px;">cWebColorPicker</span>
<svg style="left:25.0px;top:228.5px;" width="16" height="16" viewBox="0 0 16 16"><path d="M1.4 1V3.2H3.8V1M12.2 1V3.2H14.6V1" stroke="#5a5a5a" stroke-width="0.9" fill="none" /><path d="M8 2.4V6" stroke="#222" stroke-width="1.6" fill="none" /><path d="M5.2 3.6L8 0.4L10.8 3.6Z" fill="#222"/><path d="M4.6 6H11.4" stroke="#222" stroke-width="1" fill="none" /><rect x="6.4" y="8.4" width="3.2" height="6.4" fill="#2a5fc0" stroke="#1a3a80" stroke-width="0.8"/></svg>
<span class="t" style="left:48.4px;top:228.50px;font-size:12px;line-height:16px;color:#1e1e1e;letter-spacing:0.049px;">cWebColumn</span>
<svg style="left:25.0px;top:248.5px;" width="16" height="16" viewBox="0 0 16 16"><path d="M1.4 1V3.2H3.8V1M12.2 1V3.2H14.6V1" stroke="#5a5a5a" stroke-width="0.9" fill="none" /><path d="M8 2.4V6" stroke="#222" stroke-width="1.6" fill="none" /><path d="M5.2 3.6L8 0.4L10.8 3.6Z" fill="#222"/><path d="M4.6 6H11.4" stroke="#222" stroke-width="1" fill="none" /><rect x="2" y="9" width="12" height="5.4" fill="#fdfdfd" stroke="#3a3a3a" stroke-width="1.1" rx="2.6"/></svg>
<span class="t" style="left:48.4px;top:248.50px;font-size:12px;line-height:16px;color:#1e1e1e;letter-spacing:0.119px;">cWebColumnButton</span>
<svg style="left:25.0px;top:268.5px;" width="16" height="16" viewBox="0 0 16 16"><path d="M1.4 1V3.2H3.8V1M12.2 1V3.2H14.6V1" stroke="#5a5a5a" stroke-width="0.9" fill="none" /><path d="M8 2.4V6" stroke="#222" stroke-width="1.6" fill="none" /><path d="M5.2 3.6L8 0.4L10.8 3.6Z" fill="#222"/><path d="M4.6 6H11.4" stroke="#222" stroke-width="1" fill="none" /><rect x="3.6" y="8" width="8.2" height="6.8" fill="#fdfdfd" stroke="#3a3a3a" stroke-width="1.1"/><path d="M5.4 11.2L7.2 13.2L10.2 9.2" stroke="#1c8a2a" stroke-width="1.4" fill="none" /></svg>
<span class="t" style="left:48.4px;top:268.50px;font-size:12px;line-height:16px;color:#1e1e1e;letter-spacing:-0.015px;">cWebColumnCheckbox</span>
<svg style="left:25.0px;top:288.5px;" width="16" height="16" viewBox="0 0 16 16"><path d="M1.4 1V3.2H3.8V1M12.2 1V3.2H14.6V1" stroke="#5a5a5a" stroke-width="0.9" fill="none" /><path d="M8 2.4V6" stroke="#222" stroke-width="1.6" fill="none" /><path d="M5.2 3.6L8 0.4L10.8 3.6Z" fill="#222"/><path d="M4.6 6H11.4" stroke="#222" stroke-width="1" fill="none" /><rect x="1.6" y="9" width="12.8" height="5.4" fill="#fdfdfd" stroke="#3a3a3a" stroke-width="1.1"/><path d="M10.2 9V14.4" stroke="#3a3a3a" stroke-width="1" fill="none" /><path d="M11.2 11H13.4L12.3 12.6Z" fill="#3a3a3a"/></svg>
<span class="t" style="left:48.4px;top:288.50px;font-size:12px;line-height:16px;color:#1e1e1e;letter-spacing:0.140px;">cWebColumnCombo</span>
<svg style="left:25.0px;top:308.5px;" width="16" height="16" viewBox="0 0 16 16"><path d="M1.4 1V3.2H3.8V1M12.2 1V3.2H14.6V1" stroke="#5a5a5a" stroke-width="0.9" fill="none" /><path d="M8 2.4V6" stroke="#222" stroke-width="1.6" fill="none" /><path d="M5.2 3.6L8 0.4L10.8 3.6Z" fill="#222"/><path d="M4.6 6H11.4" stroke="#222" stroke-width="1" fill="none" /><rect x="1.6" y="7.6" width="12.8" height="7.2" fill="#fdfdfd" stroke="#3a3a3a" stroke-width="1.1"/><rect x="1.6" y="7.4" width="12.8" height="1.8" fill="#2a2a2a"/><path d="M1.6 12H14.4M5.8 9.2V14.8M10.2 9.2V14.8" stroke="#3a3a3a" stroke-width="0.9" fill="none" /><rect x="7" y="12.2" width="3" height="2.4" fill="#d82010"/></svg>
<span class="t" style="left:48.4px;top:308.50px;font-size:12px;line-height:16px;color:#1e1e1e;letter-spacing:-0.040px;">cWebColumnDate</span>
<svg style="left:25.0px;top:328.5px;" width="16" height="16" viewBox="0 0 16 16"><path d="M1.4 1V3.2H3.8V1M12.2 1V3.2H14.6V1" stroke="#5a5a5a" stroke-width="0.9" fill="none" /><path d="M8 2.4V6" stroke="#222" stroke-width="1.6" fill="none" /><path d="M5.2 3.6L8 0.4L10.8 3.6Z" fill="#222"/><path d="M4.6 6H11.4" stroke="#222" stroke-width="1" fill="none" /><rect x="2.6" y="8.4" width="10.8" height="6.4" fill="#fdfdfd" stroke="#3a3a3a" stroke-width="1.1"/><path d="M3.4 13.4L6 11L8 12.6L10.4 10.4L12.6 12.4" stroke="#3a3a3a" stroke-width="0.9" fill="none" /></svg>
<span class="t" style="left:48.4px;top:328.50px;font-size:12px;line-height:16px;color:#1e1e1e;letter-spacing:0.035px;">cWebColumnImage</span>
<svg style="left:25.0px;top:348.5px;" width="16" height="16" viewBox="0 0 16 16"><path d="M1.4 1V3.2H3.8V1M12.2 1V3.2H14.6V1" stroke="#5a5a5a" stroke-width="0.9" fill="none" /><path d="M8 2.4V6" stroke="#222" stroke-width="1.6" fill="none" /><path d="M5.2 3.6L8 0.4L10.8 3.6Z" fill="#222"/><path d="M4.6 6H11.4" stroke="#222" stroke-width="1" fill="none" /><path d="M6 8.8H10M8 8.8V12.6M6 12.6H10" stroke="#2a5fc0" stroke-width="1" fill="none" /><path d="M5 14.6H11" stroke="#2a5fc0" stroke-width="1" fill="none" /></svg>
<span class="t" style="left:48.4px;top:348.50px;font-size:12px;line-height:16px;color:#1e1e1e;letter-spacing:0.041px;">cWebColumnLink</span>
<svg style="left:25.0px;top:368.5px;" width="16" height="16" viewBox="0 0 16 16"><path d="M1.4 1V3.2H3.8V1M12.2 1V3.2H14.6V1" stroke="#5a5a5a" stroke-width="0.9" fill="none" /><path d="M8 2.4V6" stroke="#222" stroke-width="1.6" fill="none" /><path d="M5.2 3.6L8 0.4L10.8 3.6Z" fill="#222"/><path d="M4.6 6H11.4" stroke="#222" stroke-width="1" fill="none" /><path d="M3.6 9H12.4M3.6 11.6H12.4M3.6 14.2H12.4" stroke="#2a2a2a" stroke-width="1.5" fill="none" /></svg>
<span class="t" style="left:48.4px;top:368.50px;font-size:12px;line-height:16px;color:#1e1e1e;letter-spacing:-0.013px;">cWebColumnSuggestion</span>
<svg style="left:25.0px;top:388.5px;" width="16" height="16" viewBox="0 0 16 16"><rect x="1.6" y="1.8" width="12.8" height="4" fill="#fdfdfd" stroke="#3a3a3a" stroke-width="1.1"/><path d="M10.4 1.8V5.8" stroke="#3a3a3a" stroke-width="1" fill="none" /><rect x="1.6" y="6.8" width="10" height="7.8" fill="#fdfdfd" stroke="#3a3a3a" stroke-width="1.1"/><path d="M1.6 9.4H11.6M1.6 12H11.6" stroke="#3a3a3a" stroke-width="1" fill="none" /></svg>
<span class="t" style="left:48.4px;top:388.50px;font-size:12px;line-height:16px;color:#1e1e1e;letter-spacing:0.029px;">cWebCombo</span>
<svg style="left:25.0px;top:408.5px;" width="16" height="16" viewBox="0 0 16 16"><rect x="1.6" y="1.8" width="12.8" height="12.8" fill="none" stroke="#3a3a3a" stroke-width="1.2"/><rect x="1.6" y="1.6" width="12.8" height="2.6" fill="#7a7a7a" stroke="#3a3a3a" stroke-width="1"/><path d="M4.8 4.2V14.6M11.2 4.2V14.6" stroke="#3a3a3a" stroke-width="1.2" fill="none" /></svg>
<span class="t" style="left:48.4px;top:408.50px;font-size:12px;line-height:16px;color:#1e1e1e;letter-spacing:-0.085px;">cWebCommandBar</span>
<svg style="left:25.0px;top:428.5px;" width="16" height="16" viewBox="0 0 16 16"><rect x="1.6" y="2" width="12.8" height="12.4" fill="#fdfdfd" stroke="#3a3a3a" stroke-width="1.1"/><rect x="1.6" y="1.8" width="12.8" height="2.2" fill="#2a2a2a"/><path d="M1.6 7.4H14.4M1.6 10.8H14.4M5.8 4V14.4M10.2 4V14.4" stroke="#3a3a3a" stroke-width="0.9" fill="none" /><rect x="6.6" y="7.8" width="3.4" height="2.8" fill="#d82010"/></svg>
<span class="t" style="left:48.4px;top:428.50px;font-size:12px;line-height:16px;color:#1e1e1e;letter-spacing:-0.209px;">cWebDateForm</span>
<svg style="left:25.0px;top:448.5px;" width="16" height="16" viewBox="0 0 16 16"><rect x="1.6" y="2" width="12.8" height="3.2" fill="#fdfdfd" stroke="#3a3a3a" stroke-width="1.1"/><rect x="4.6" y="6.4" width="9.8" height="8" fill="#fdfdfd" stroke="#3a3a3a" stroke-width="1.1"/><rect x="4.6" y="6.2" width="9.8" height="1.8" fill="#2a2a2a"/><path d="M4.6 11H14.4M8 8V14.4M11.2 8V14.4" stroke="#3a3a3a" stroke-width="0.8" fill="none" /><rect x="11.4" y="11.2" width="2.6" height="2.8" fill="#3a3a3a"/></svg>
<span class="t" style="left:48.4px;top:448.50px;font-size:12px;line-height:16px;color:#1e1e1e;letter-spacing:-0.283px;">cWebDatePicker</span>
<svg style="left:25.0px;top:468.5px;" width="16" height="16" viewBox="0 0 16 16"><rect x="1.6" y="2.4" width="12.8" height="11.2" fill="#fdfdfd" stroke="#7a7a7a" stroke-width="1.1"/><path d="M3.4 1.2H6.8M5.1 1.2V8.6M3.4 8.6H6.8" stroke="#6a6a6a" stroke-width="1" fill="none" /></svg>
<span class="t" style="left:48.4px;top:468.50px;font-size:12px;line-height:16px;color:#1e1e1e;letter-spacing:-0.218px;">cWebEdit</span>
<svg style="left:25.0px;top:488.5px;" width="16" height="16" viewBox="0 0 16 16"><path d="M4 3H9L10 1.8H15.4V10.4H4Z" fill="#e4c48a"/><path d="M2.6 4.6H14V11H2.6Z" fill="#d8b06c"/><rect x="1.4" y="9.6" width="9.6" height="5" fill="#fdfdfd" stroke="#3a3a3a" stroke-width="1.1"/></svg>
<span class="t" style="left:48.4px;top:488.50px;font-size:12px;line-height:16px;color:#1e1e1e;letter-spacing:-0.146px;">cWebFileUploadForm</span>
<svg style="left:25.0px;top:508.5px;" width="16" height="16" viewBox="0 0 16 16"><path d="M4 3H9L10 1.8H15.4V10.4H4Z" fill="#e4c48a"/><path d="M2.6 4.6H14V11H2.6Z" fill="#d8b06c"/><rect x="1.4" y="9.6" width="10.6" height="5" fill="#fdfdfd" stroke="#3a3a3a" stroke-width="1.1" rx="2.4"/></svg>
<span class="t" style="left:48.4px;top:508.50px;font-size:12px;line-height:16px;color:#1e1e1e;letter-spacing:-0.066px;">cWebFileUploadButton</span>
<svg style="left:25.0px;top:528.5px;" width="16" height="16" viewBox="0 0 16 16"><rect x="4.6" y="5.6" width="10.4" height="5" fill="#fdfdfd" stroke="#6a6a6a" stroke-width="1.1"/><path d="M0.8 6.2H2.8M0.8 10H2.8M1.8 6.2V10" stroke="#5a5a5a" stroke-width="0.9" fill="none" /><path d="M3.6 3.8H6.2M4.9 3.8V12.6M3.6 12.6H6.2" stroke="#5a5a5a" stroke-width="0.9" fill="none" /></svg>
<span class="t" style="left:48.4px;top:528.50px;font-size:12px;line-height:16px;color:#1e1e1e;letter-spacing:-0.157px;">cWebForm</span>
<svg style="left:25.0px;top:548.5px;" width="16" height="16" viewBox="0 0 16 16"><rect x="1.6" y="1.8" width="12.8" height="12.8" fill="#fdfdfd" stroke="#3a3a3a" stroke-width="1.2"/><rect x="1.6" y="1.6" width="12.8" height="2.6" fill="#8a8a8a" stroke="#3a3a3a" stroke-width="0.8"/><path d="M1.6 7.2H14.4M1.6 9.8H14.4M1.6 12.2H14.4M5.6 4.4V14.6M8.6 4.4V14.6M11.6 4.4V14.6" stroke="#3a3a3a" stroke-width="0.9" fill="none" /></svg>
<span class="t" style="left:48.4px;top:548.50px;font-size:12px;line-height:16px;color:#1e1e1e;letter-spacing:-0.268px;">cWebGrid</span>
<svg style="left:25.0px;top:568.5px;" width="16" height="16" viewBox="0 0 16 16"><rect x="1.6" y="2.2" width="12.8" height="11.8" fill="#fdfdfd" stroke="#4a4a4a" stroke-width="1.1"/><path d="M6.6 5.4L3.8 8L6.6 10.6M9.4 5.4L12.2 8L9.4 10.6" stroke="#5a5a5a" stroke-width="1" fill="none" /></svg>
<span class="t" style="left:48.4px;top:568.50px;font-size:12px;line-height:16px;color:#1e1e1e;letter-spacing:0.009px;">cWebHtmlBox</span>
<svg style="left:25.0px;top:588.5px;" width="16" height="16" viewBox="0 0 16 16"><path d="M1 8.2H15" stroke="#4a4a4a" stroke-width="1" fill="none" /></svg>
<span class="t" style="left:48.4px;top:588.50px;font-size:12px;line-height:16px;color:#1e1e1e;letter-spacing:-0.037px;">cWebHorizontalLine</span>
<svg style="left:25.0px;top:608.5px;" width="16" height="16" viewBox="0 0 16 16"><rect x="1.6" y="2.2" width="12.8" height="11.8" fill="#fdfdfd" stroke="#3a3a3a" stroke-width="1.2"/><path d="M1.6 4.6H14.4M1.6 12H14.4" stroke="#3a3a3a" stroke-width="1" fill="none" /><path d="M6.8 6.4L4.8 8.2L6.8 10M9.2 6.4L11.2 8.2L9.2 10" stroke="#6a6a6a" stroke-width="0.9" fill="none" /></svg>
<span class="t" style="left:48.4px;top:608.50px;font-size:12px;line-height:16px;color:#1e1e1e;letter-spacing:-0.297px;">cWebIFrame</span>
<svg style="left:25.0px;top:628.5px;" width="16" height="16" viewBox="0 0 16 16"><rect x="1.6" y="2" width="12.8" height="12.4" fill="#fdfdfd" stroke="#2a2a2a" stroke-width="1.3"/><path d="M2 11.6L5.4 7.6L8 10.6L10.6 8.4L14 11.6" stroke="#2a2a2a" stroke-width="1.3" fill="none" /><circle cx="10.6" cy="5.2" r="1.2" fill="#2a2a2a"/></svg>
<span class="t" style="left:48.4px;top:628.50px;font-size:12px;line-height:16px;color:#1e1e1e;letter-spacing:-0.157px;">cWebImage</span>
<svg style="left:25.0px;top:648.5px;" width="16" height="16" viewBox="0 0 16 16"><path d="M1.8 1.6H14.2V4.2H9.4V14.8H6.6V4.2H1.8Z" fill="#9cc0ee"/><path d="M1.8 1.6H14.2V4.2H9.4V14.8H6.6V4.2H1.8Z" stroke="#2a62b8" stroke-width="0.9" fill="none" /></svg>
<span class="t" style="left:48.4px;top:648.50px;font-size:12px;line-height:16px;color:#1e1e1e;letter-spacing:-0.270px;">cWebLabel</span>
<svg style="left:25.0px;top:668.5px;" width="16" height="16" viewBox="0 0 16 16"><rect x="1.6" y="1.8" width="12.8" height="12.8" fill="#fdfdfd" stroke="#3a3a3a" stroke-width="1.2"/><path d="M1.6 4.8H14.4M1.6 11.4H14.4M11 1.8V14.6" stroke="#3a3a3a" stroke-width="1" fill="none" /><rect x="1.6" y="5.6" width="9.4" height="3.4" fill="#1c4a9c"/><path d="M2 9H11" stroke="#3a3a3a" stroke-width="0.8" fill="none" /></svg>
<span class="t" style="left:48.4px;top:668.50px;font-size:12px;line-height:16px;color:#1e1e1e;letter-spacing:-0.193px;">cWebList</span>
<svg style="left:25.0px;top:688.5px;" width="16" height="16" viewBox="0 0 16 16"><path d="M1.4 1V3.2H3.8V1M12.2 1V3.2H14.6V1" stroke="#5a5a5a" stroke-width="0.9" fill="none" /><path d="M8 2.4V6" stroke="#222" stroke-width="1.6" fill="none" /><path d="M5.2 3.6L8 0.4L10.8 3.6Z" fill="#222"/><path d="M4.6 6H11.4" stroke="#222" stroke-width="1" fill="none" /><rect x="2" y="9" width="12" height="5.4" fill="#fdfdfd" stroke="#3a3a3a" stroke-width="1.1" rx="2.6"/></svg>
<span class="t" style="left:48.4px;top:688.50px;font-size:12px;line-height:16px;color:#1e1e1e;letter-spacing:-0.122px;">cWebListSwipeButton</span>
<svg style="left:25.0px;top:708.5px;" width="16" height="16" viewBox="0 0 16 16"><path d="M1.4 2.4H9" stroke="#3a3a3a" stroke-width="1.6" fill="none" /><rect x="8.2" y="1.6" width="6.4" height="13" fill="#fdfdfd" stroke="#3a3a3a" stroke-width="1.1"/><rect x="8.2" y="5.8" width="6.4" height="3.6" fill="#2a5fc0" stroke="#3a3a3a" stroke-width="0.8"/><path d="M8.2 3.8H14.6M8.2 12H14.6" stroke="#3a3a3a" stroke-width="0.9" fill="none" /></svg>
<span class="t" style="left:48.4px;top:708.50px;font-size:12px;line-height:16px;color:#1e1e1e;letter-spacing:-0.141px;">cWebMenuBar</span>
<svg style="left:25.0px;top:728.5px;" width="16" height="16" viewBox="0 0 16 16"><rect x="1.4" y="1.8" width="9.6" height="4" fill="#fdfdfd" stroke="#3a3a3a" stroke-width="1" rx="2"/><rect x="8" y="5.6" width="6.6" height="9.2" fill="#fdfdfd" stroke="#3a3a3a" stroke-width="1.1"/><rect x="8" y="9" width="6.6" height="3" fill="#2a5fc0" stroke="#3a3a3a" stroke-width="0.8"/><path d="M8 7.4H14.6" stroke="#3a3a3a" stroke-width="0.9" fill="none" /></svg>
<span class="t" style="left:48.4px;top:728.50px;font-size:12px;line-height:16px;color:#1e1e1e;letter-spacing:0.088px;">cWebMenuButton</span>
<svg style="left:25.0px;top:748.5px;" width="16" height="16" viewBox="0 0 16 16"><rect x="4.8" y="1.6" width="6.4" height="13" fill="#fdfdfd" stroke="#3a3a3a" stroke-width="1.1"/><rect x="4.8" y="5.8" width="6.4" height="3.6" fill="#2a5fc0" stroke="#3a3a3a" stroke-width="0.8"/><path d="M4.8 3.8H11.2M4.8 12H11.2" stroke="#3a3a3a" stroke-width="0.9" fill="none" /></svg>
<span class="t" style="left:48.4px;top:748.50px;font-size:12px;line-height:16px;color:#1e1e1e;letter-spacing:0.049px;">cWebMenuItem</span>
<svg style="left:25.0px;top:768.5px;" width="16" height="16" viewBox="0 0 16 16"><rect x="4.8" y="1.6" width="6.4" height="13" fill="#fdfdfd" stroke="#3a3a3a" stroke-width="1.1"/><rect x="4.8" y="5.8" width="6.4" height="3.6" fill="#2a5fc0" stroke="#3a3a3a" stroke-width="0.8"/><path d="M4.8 3.8H11.2M4.8 12H11.2" stroke="#3a3a3a" stroke-width="0.9" fill="none" /></svg>
<span class="t" style="left:48.4px;top:768.50px;font-size:12px;line-height:16px;color:#1e1e1e;letter-spacing:-0.036px;">cWebMenuItemLoadView</span>
<svg style="left:25.0px;top:788.5px;" width="16" height="16" viewBox="0 0 16 16"><rect x="4.8" y="1.6" width="6.4" height="13" fill="#fdfdfd" stroke="#3a3a3a" stroke-width="1.1"/><path d="M4.8 4.8H11.2M4.8 8H11.2" stroke="#3a3a3a" stroke-width="0.9" fill="none" /><rect x="4.8" y="10.6" width="6.4" height="2.4" fill="#2a5fc0" stroke="#3a3a3a" stroke-width="0.8"/></svg>
<span class="t" style="left:48.4px;top:788.50px;font-size:12px;line-height:16px;color:#1e1e1e;letter-spacing:-0.063px;">cWebMenuList</span>
<svg style="left:25.0px;top:808.5px;" width="16" height="16" viewBox="0 0 16 16"><path d="M8 1.4L14 4.4V11.4L8 14.6L2 11.4V4.4Z" stroke="#3a3a3a" stroke-width="1.1" fill="none" /><path d="M2 4.4L8 7.6L14 4.4M8 7.6V14.6" stroke="#3a3a3a" stroke-width="1" fill="none" /></svg>
<span class="t" style="left:48.4px;top:808.50px;font-size:12px;line-height:16px;color:#1e1e1e;letter-spacing:-0.034px;">cWebObject</span>
<svg style="left:25.0px;top:828.5px;" width="16" height="16" viewBox="0 0 16 16"><rect x="5" y="1.6" width="9.6" height="3.4" fill="#fdfdfd" stroke="#3a3a3a" stroke-width="1.1"/><path d="M11.6 1.6V5" stroke="#3a3a3a" stroke-width="0.9" fill="none" /><rect x="6.6" y="6" width="6.6" height="7.4" fill="#fdfdfd" stroke="#3a3a3a" stroke-width="1"/><path d="M6.6 8.4H13.2M6.6 10.8H13.2" stroke="#3a3a3a" stroke-width="0.9" fill="none" /><path d="M1 10.1A2.7 1.5 0 0 1 6.4 10.1V13.5A2.7 1.5 0 0 1 1 13.5Z" fill="#2a2a2a"/><ellipse cx="3.7" cy="10.1" rx="2.0" ry="0.9" fill="#9a9a9a"/></svg>
<span class="t" style="left:48.4px;top:828.50px;font-size:12px;line-height:16px;color:#1e1e1e;letter-spacing:-0.073px;">cWebParentCombo</span>
<svg style="left:25.0px;top:848.5px;" width="16" height="16" viewBox="0 0 16 16"><rect x="1.4" y="5.2" width="13.2" height="5.6" fill="#fdfdfd" stroke="#3a3a3a" stroke-width="1.1"/><rect x="2.8" y="6.8" width="5.2" height="2.4" fill="#2a2a2a"/></svg>
<span class="t" style="left:48.4px;top:848.50px;font-size:12px;line-height:16px;color:#1e1e1e;letter-spacing:-0.390px;">cWebProgressBar</span>
<svg style="left:25.0px;top:868.5px;" width="16" height="16" viewBox="0 0 16 16"><rect x="1.6" y="1.8" width="12.8" height="12.8" fill="#fdfdfd" stroke="#3a3a3a" stroke-width="1.2"/><path d="M1.6 4.8H14.4M1.6 11.4H14.4M10.6 1.8V14.6" stroke="#3a3a3a" stroke-width="1" fill="none" /><rect x="1.6" y="5.6" width="9" height="2.8" fill="#1c4a9c"/><rect x="1.6" y="9" width="9" height="2.2" fill="#4a78c8"/></svg>
<span class="t" style="left:48.4px;top:868.50px;font-size:12px;line-height:16px;color:#1e1e1e;letter-spacing:-0.015px;">cWebPromptList</span>
<svg style="left:25.0px;top:888.5px;" width="16" height="16" viewBox="0 0 16 16"><circle cx="8" cy="8" r="6.4" fill="#fdfdfd" stroke="#8a8a8a" stroke-width="1.2"/><circle cx="8" cy="8" r="2.4" fill="#8a8a8a"/></svg>
<span class="t" style="left:48.4px;top:888.50px;font-size:12px;line-height:16px;color:#1e1e1e;letter-spacing:-0.268px;">cWebRadio</span>
<svg style="left:25.0px;top:908.5px;" width="16" height="16" viewBox="0 0 16 16"><rect x="1.4" y="5.6" width="13.2" height="4.8" fill="#fdfdfd" stroke="#3a3a3a" stroke-width="1.1"/><path d="M3 8H6.4M9.6 8H13" stroke="#3a3a3a" stroke-width="1" fill="none" /><rect x="7.2" y="6.6" width="1.6" height="2.8" fill="#3a3a3a"/></svg>
<span class="t" style="left:48.4px;top:908.50px;font-size:12px;line-height:16px;color:#1e1e1e;letter-spacing:-0.254px;">cWebSlider</span>
<svg style="left:25.0px;top:928.5px;" width="16" height="16" viewBox="0 0 16 16"><path d="M1.4 5.6H14.6V10.4H1.4Z" stroke="#6a6a6a" stroke-width="1" fill="none" stroke-dasharray="1.6 1.2"/></svg>
<span class="t" style="left:48.4px;top:928.50px;font-size:12px;line-height:16px;color:#1e1e1e;letter-spacing:-0.368px;">cWebSpacer</span>
<svg style="left:25.0px;top:948.5px;" width="16" height="16" viewBox="0 0 16 16"><rect x="1.4" y="1.6" width="5.4" height="4.6" fill="#fdfdfd" stroke="#6a6a6a" stroke-width="0.9"/><path d="M2.8 2.8V5M4 2.8V5" stroke="#6a6a6a" stroke-width="0.7" fill="none" /><path d="M7 3.4H14.4" stroke="#3a3a3a" stroke-width="1" fill="none" /><rect x="7.4" y="6.2" width="7.2" height="8.6" fill="#fdfdfd" stroke="#3a3a3a" stroke-width="1.1"/><rect x="7.4" y="10" width="7.2" height="3.4" fill="#2a5fc0" stroke="#3a3a3a" stroke-width="0.8"/><path d="M7.4 8.2H14.6" stroke="#3a3a3a" stroke-width="0.8" fill="none" /></svg>
<span class="t" style="left:48.4px;top:948.50px;font-size:12px;line-height:16px;color:#1e1e1e;letter-spacing:-0.106px;">cWebSuggestionForm</span>
<svg style="left:25.0px;top:968.5px;" width="16" height="16" viewBox="0 0 16 16"><circle cx="8" cy="8" r="6.6" fill="#fdfdfd" stroke="#9a9a9a" stroke-width="1.2"/><path d="M8 3.8V8.2H11.6" stroke="#9a9a9a" stroke-width="1.2" fill="none" /></svg>
<span class="t" style="left:48.4px;top:968.50px;font-size:12px;line-height:16px;color:#1e1e1e;letter-spacing:-0.054px;">cWebTimer</span>
<div style="left:26px;top:991px;width:14px;height:1px;background:#bdbdbd;"></div>
<div style="left:48px;top:991px;width:60px;height:1.5px;background:#c9c9c9;"></div>
<div style="left:200px;top:121px;width:16px;height:872px;background:#f0f0f0;"></div>
<div style="left:201px;top:138px;width:14px;height:751px;background:#cdcdcd;"></div>
<svg style="left:203px;top:127px;" width="9" height="6" viewBox="0 0 9 6"><path d="M0.7 5L4.5 1.2L8.3 5" stroke="#505050" stroke-width="1.6" fill="none"/></svg>
<svg style="left:203px;top:982px;" width="9" height="6" viewBox="0 0 9 6"><path d="M0.7 1L4.5 4.8L8.3 1" stroke="#505050" stroke-width="1.6" fill="none"/></svg>
<div style="left:0px;top:993px;width:216px;height:25px;background:#eeeef1;"></div>
<div style="left:3px;top:995px;width:134px;height:21px;background:#e9e9ed;"></div>
<div style="left:138px;top:993px;width:74px;height:25px;background:#fcfcfd;"></div>
<svg style="left:6.0px;top:997.0px;" width="16" height="16" viewBox="0 0 16 16"><rect x="6" y="1.2" width="9" height="6.5" fill="#f4f4f4" stroke="#3c3c3c" stroke-width="1"/><rect x="6" y="1.2" width="9" height="1.6" fill="#3c3c3c"/><path d="M6 4.45H15M6 6.140000000000001H15M9.6 2.8V7.7" stroke="#3c3c3c" stroke-width="0.8" fill="none" /><rect x="3.6" y="4" width="9" height="6.5" fill="#f4f4f4" stroke="#3c3c3c" stroke-width="1"/><rect x="3.6" y="4" width="9" height="1.6" fill="#3c3c3c"/><path d="M3.6 7.25H12.6M3.6 8.940000000000001H12.6M7.2 5.6V10.5" stroke="#3c3c3c" stroke-width="0.8" fill="none" /><rect x="1" y="7.2" width="9.4" height="7.4" fill="#f4f4f4" stroke="#3c3c3c" stroke-width="1"/><rect x="1" y="7.2" width="9.4" height="1.6" fill="#3c3c3c"/><path d="M1 10.9H10.4M1 12.824000000000002H10.4M4.76 8.8V14.600000000000001" stroke="#3c3c3c" stroke-width="0.8" fill="none" /><circle cx="11.2" cy="10.4" r="2.4" fill="#f4f4f4" stroke="#3c3c3c" stroke-width="1.3"/><path d="M12.8 12.2L15.2 15" stroke="#3c3c3c" stroke-width="1.7" fill="none" /></svg>
<span class="t" style="left:27px;top:997.50px;font-size:12px;line-height:16px;color:#1e1e1e;letter-spacing:-0.559px;">Table ...</span>
<div style="left:70px;top:996px;width:1px;height:18px;background:#d6d6db;"></div>
<svg style="left:76.0px;top:997.0px;" width="16" height="16" viewBox="0 0 16 16"><rect x="1.6" y="2" width="12.8" height="12.4" fill="#f7e7c8" stroke="#3c3c3c" stroke-width="1.2"/><rect x="1.6" y="1.6" width="12.8" height="2.8" fill="#2e2e2e"/><rect x="4" y="6.2" width="3.4" height="3" fill="#e8a020"/><rect x="7.8" y="8.6" width="3.6" height="3" fill="#e8a020"/><rect x="9.6" y="11.2" width="3" height="2.4" fill="#e8a020"/><path d="M5.6 8.6V10.2H8M9.6 11V12.4" stroke="#c07810" stroke-width="0.8" fill="none" /></svg>
<span class="t" style="left:95px;top:997.50px;font-size:12px;line-height:16px;color:#1e1e1e;letter-spacing:-0.379px;">Code ...</span>
<svg style="left:144.0px;top:997.0px;" width="16" height="16" viewBox="0 0 16 16"><path d="M8.4 1.2C3.6 1 0.8 4.6 1 8.4C1.2 12.6 4.8 15.2 8.6 14.8C11.4 14.6 12 12.6 10.6 11.2C9.4 10 10.6 8.4 12.4 8.8C14.6 9.2 15.4 7.6 15 6C14.4 3.4 11.8 1.4 8.4 1.2Z" fill="#343434"/><circle cx="4.4" cy="5.4" r="1.1" fill="#d8d8d8"/><circle cx="7.6" cy="3.6" r="1.1" fill="#d8d8d8"/><circle cx="11.2" cy="4.6" r="1.1" fill="#d8d8d8"/><circle cx="3.8" cy="9.2" r="1.1" fill="#d8d8d8"/><circle cx="6.2" cy="12" r="1.1" fill="#d8d8d8"/></svg>
<span class="t" style="left:163px;top:997.50px;font-size:12px;line-height:16px;color:#1e1e1e;letter-spacing:-0.483px;">Class ...</span>
<span class="t" style="left:230px;top:104.50px;font-size:12px;line-height:16px;color:#303030;letter-spacing:-0.202px;">Workspace Dashboard</span>
<span class="t" style="left:375px;top:104.50px;font-size:12px;line-height:16px;color:#303030;letter-spacing:-0.114px;">WebApp.src</span>
<div style="left:460px;top:104px;width:103px;height:18px;background:#007acc;"></div>
<span class="t" style="left:466px;top:104.50px;font-size:12px;line-height:16px;color:#ffffff;letter-spacing:-0.116px;">Dashboard.wo</span>
<svg style="left:548.5px;top:107.5px;" width="10" height="10" viewBox="0 0 10 10"><path d="M1.1 1.1L8.9 8.9M8.9 1.1L1.1 8.9" stroke="#ffffff" stroke-width="2" fill="none"/></svg>
<svg style="left:1621px;top:109px;" width="8" height="5" viewBox="0 0 8 5"><path d="M0 0.5H8L4 4.5Z" fill="#555"/></svg>
<svg style="left:1635px;top:105px;" width="12" height="12" viewBox="0 0 12 12"><path d="M1 1L11 11M11 1L1 11" stroke="#444" stroke-width="1.2" fill="none"/></svg>
<div style="left:221px;top:122px;width:1427px;height:1px;background:#2673b3;"></div>
<div style="left:221px;top:123px;width:1411px;height:617px;background:#ffffff;"></div>
<div style="left:222px;top:123px;width:24px;height:617px;background:#dddff0;"></div>
<span class="t" style="left:249px;top:124.70px;font-size:12.4px;line-height:15px;color:#181818;font-family:'Liberation Mono',monospace;letter-spacing:-0.441px;">01 <span style="color:#2424d8">Use</span> cWebView.pkg</span>
<span class="t" style="left:249px;top:139.70px;font-size:12.4px;line-height:15px;color:#181818;font-family:'Liberation Mono',monospace;letter-spacing:-0.441px;">02 <span style="color:#2424d8">Use</span> cWebPanel.pkg</span>
<span class="t" style="left:249px;top:154.70px;font-size:12.4px;line-height:15px;color:#181818;font-family:'Liberation Mono',monospace;letter-spacing:-0.441px;">03 <span style="color:#2424d8">Use</span> cWebButton.pkg</span>
<span class="t" style="left:249px;top:169.70px;font-size:12.4px;line-height:15px;color:#181818;font-family:'Liberation Mono',monospace;letter-spacing:-0.441px;">04 </span>
<span class="t" style="left:249px;top:184.70px;font-size:12.4px;line-height:15px;color:#181818;font-family:'Liberation Mono',monospace;letter-spacing:-0.441px;">05 </span>
<span class="t" style="left:249px;top:199.70px;font-size:12.4px;line-height:15px;color:#181818;font-family:'Liberation Mono',monospace;letter-spacing:-0.441px;">06 <span style="color:#2424d8">Object</span> oDashboard <span style="color:#2424d8">is a</span> cWebView</span>
<span class="t" style="left:249px;top:214.70px;font-size:12.4px;line-height:15px;color:#181818;font-family:'Liberation Mono',monospace;letter-spacing:-0.441px;">07 </span>
<span class="t" style="left:249px;top:229.70px;font-size:12.4px;line-height:15px;color:#181818;font-family:'Liberation Mono',monospace;letter-spacing:-0.441px;">08     <span style="color:#159332">// - - - - - - - - - - - - - - - - - - - - - - - - - - - - - - - - - - -</span></span>
<span class="t" style="left:249px;top:244.70px;font-size:12.4px;line-height:15px;color:#181818;font-family:'Liberation Mono',monospace;letter-spacing:-0.441px;">09     <span style="color:#159332">// Add a DDO Structure</span></span>
<span class="t" style="left:249px;top:259.70px;font-size:12.4px;line-height:15px;color:#181818;font-family:'Liberation Mono',monospace;letter-spacing:-0.441px;">10     <span style="color:#159332">//</span></span>
<span class="t" style="left:249px;top:274.70px;font-size:12.4px;line-height:15px;color:#181818;font-family:'Liberation Mono',monospace;letter-spacing:-0.441px;">11     <span style="color:#159332">// There is no need to synchronize a DD structure on the client so we do</span></span>
<span class="t" style="left:249px;top:289.70px;font-size:12.4px;line-height:15px;color:#181818;font-family:'Liberation Mono',monospace;letter-spacing:-0.441px;">12     <span style="color:#159332">// not set the Server property or send ADDOStructure. We will simply use</span></span>
<span class="t" style="left:249px;top:304.70px;font-size:12.4px;line-height:15px;color:#181818;font-family:'Liberation Mono',monospace;letter-spacing:-0.441px;">13     <span style="color:#159332">// DDO's to mine data and generate HTML for our cWebHTMLBox objects.</span></span>
<span class="t" style="left:249px;top:319.70px;font-size:12.4px;line-height:15px;color:#181818;font-family:'Liberation Mono',monospace;letter-spacing:-0.441px;">14     <span style="color:#159332">// It is the HTML in these objects that is sent to the client each time</span></span>
<span class="t" style="left:249px;top:334.70px;font-size:12.4px;line-height:15px;color:#181818;font-family:'Liberation Mono',monospace;letter-spacing:-0.441px;">15     <span style="color:#159332">// this page is shown.</span></span>
<span class="t" style="left:249px;top:349.70px;font-size:12.4px;line-height:15px;color:#181818;font-family:'Liberation Mono',monospace;letter-spacing:-0.441px;">16     <span style="color:#159332">//</span></span>
<span class="t" style="left:249px;top:364.70px;font-size:12.4px;line-height:15px;color:#181818;font-family:'Liberation Mono',monospace;letter-spacing:-0.441px;">17     <span style="color:#159332">// Also, it is important for the drill-down Navigation interface that we</span></span>
<span class="t" style="left:249px;top:379.70px;font-size:12.4px;line-height:15px;color:#181818;font-family:'Liberation Mono',monospace;letter-spacing:-0.441px;">18     <span style="color:#159332">// do not set the Server property to some DDO because this will affect</span></span>
<span class="t" style="left:249px;top:394.70px;font-size:12.4px;line-height:15px;color:#181818;font-family:'Liberation Mono',monospace;letter-spacing:-0.441px;">19     <span style="color:#159332">// constraints in the next view that we navigate to.</span></span>
<span class="t" style="left:249px;top:409.70px;font-size:12.4px;line-height:15px;color:#181818;font-family:'Liberation Mono',monospace;letter-spacing:-0.441px;">20     <span style="color:#159332">// - - - - - - - - - - - - - - - - - - - - - - - - - - - - - - - - - - -</span></span>
<span class="t" style="left:249px;top:424.70px;font-size:12.4px;line-height:15px;color:#181818;font-family:'Liberation Mono',monospace;letter-spacing:-0.441px;">21 </span>
<span class="t" style="left:249px;top:439.70px;font-size:12.4px;line-height:15px;color:#181818;font-family:'Liberation Mono',monospace;letter-spacing:-0.441px;">22 <span style="color:#159332">//    Set piMaxWidth to 1024</span></span>
<span class="t" style="left:249px;top:454.70px;font-size:12.4px;line-height:15px;color:#181818;font-family:'Liberation Mono',monospace;letter-spacing:-0.441px;">23 </span>
<span class="t" style="left:249px;top:469.70px;font-size:12.4px;line-height:15px;color:#181818;font-family:'Liberation Mono',monospace;letter-spacing:-0.441px;">24     <span style="color:#2424d8">Set</span> psCaption <span style="color:#2424d8">to</span> <span style="color:#b030b8">"Dashboard"</span></span>
<span class="t" style="left:249px;top:484.70px;font-size:12.4px;line-height:15px;color:#181818;font-family:'Liberation Mono',monospace;letter-spacing:-0.441px;">25     <span style="color:#2424d8">Set</span> peViewType <span style="color:#2424d8">to</span> vtUndefined</span>
<span class="t" style="left:249px;top:499.70px;font-size:12.4px;line-height:15px;color:#181818;font-family:'Liberation Mono',monospace;letter-spacing:-0.441px;">26 </span>
<span class="t" style="left:249px;top:514.70px;font-size:12.4px;line-height:15px;color:#181818;font-family:'Liberation Mono',monospace;letter-spacing:-0.441px;">27 <span style="color:#159332">//    Set pbServerOnResizeWindow to True</span></span>
<span class="t" style="left:249px;top:529.70px;font-size:12.4px;line-height:15px;color:#181818;font-family:'Liberation Mono',monospace;letter-spacing:-0.441px;">28     <span style="color:#2424d8">Set</span> pbServerOnShow <span style="color:#2424d8">to</span> <span style="color:#2424d8">True</span></span>
<span class="t" style="left:249px;top:544.70px;font-size:12.4px;line-height:15px;color:#181818;font-family:'Liberation Mono',monospace;letter-spacing:-0.441px;">29     <span style="color:#2424d8">Set</span> pbShowCaption <span style="color:#2424d8">to</span> <span style="color:#2424d8">False</span></span>
<span class="t" style="left:249px;top:559.70px;font-size:12.4px;line-height:15px;color:#181818;font-family:'Liberation Mono',monospace;letter-spacing:-0.441px;">30     <span style="color:#2424d8">Set</span> psCSSClass <span style="color:#2424d8">to</span> <span style="color:#b030b8">"Dashboard"</span></span>
<span class="t" style="left:249px;top:574.70px;font-size:12.4px;line-height:15px;color:#181818;font-family:'Liberation Mono',monospace;letter-spacing:-0.441px;">31 </span>
<span class="t" style="left:249px;top:589.70px;font-size:12.4px;line-height:15px;color:#181818;font-family:'Liberation Mono',monospace;letter-spacing:-0.441px;">32     <span style="color:#2424d8">Object</span> oWebMainPanel <span style="color:#2424d8">is a</span> cWebPanel</span>
<span class="t" style="left:249px;top:604.70px;font-size:12.4px;line-height:15px;color:#181818;font-family:'Liberation Mono',monospace;letter-spacing:-0.441px;">33         <span style="color:#2424d8">Set</span> piColumnCount <span style="color:#2424d8">to</span> <span style="color:#2a2a9a">12</span></span>
<span class="t" style="left:249px;top:619.70px;font-size:12.4px;line-height:15px;color:#181818;font-family:'Liberation Mono',monospace;letter-spacing:-0.441px;">34 </span>
<span class="t" style="left:249px;top:634.70px;font-size:12.4px;line-height:15px;color:#181818;font-family:'Liberation Mono',monospace;letter-spacing:-0.441px;">35 </span>
<span class="t" style="left:249px;top:649.70px;font-size:12.4px;line-height:15px;color:#181818;font-family:'Liberation Mono',monospace;letter-spacing:-0.441px;">36 </span>
<span class="t" style="left:249px;top:664.70px;font-size:12.4px;line-height:15px;color:#181818;font-family:'Liberation Mono',monospace;letter-spacing:-0.441px;">37     <span style="color:#2424d8">End_Object</span></span>
<span class="t" style="left:249px;top:679.70px;font-size:12.4px;line-height:15px;color:#181818;font-family:'Liberation Mono',monospace;letter-spacing:-0.441px;">38 </span>
<span class="t" style="left:249px;top:694.70px;font-size:12.4px;line-height:15px;color:#181818;font-family:'Liberation Mono',monospace;letter-spacing:-0.441px;">39     <span style="color:#2424d8">Procedure</span> OnShow</span>
<span class="t" style="left:249px;top:709.70px;font-size:12.4px;line-height:15px;color:#181818;font-family:'Liberation Mono',monospace;letter-spacing:-0.441px;">40         <span style="color:#159332">// Each time this view is shown we will update the appropriate information.</span></span>
<span class="t" style="left:249px;top:724.70px;font-size:12.4px;line-height:15px;color:#181818;font-family:'Liberation Mono',monospace;letter-spacing:-0.441px;">41     <span style="color:#2424d8">End_Procedure</span></span>
<div style="left:298px;top:574px;width:1.4px;height:13px;background:#000;"></div>
<svg style="left:582px;top:578px;" width="9" height="17" viewBox="0 0 9 17"><path d="M1 0.8H3.6L4.5 1.8L5.4 0.8H8M4.5 1.8V15.2M1 16.2H3.6L4.5 15.2L5.4 16.2H8" stroke="#111" stroke-width="1" fill="none"/></svg>
<div style="left:1632px;top:123px;width:16px;height:617px;background:#f0f0f0;"></div>
<div style="left:1633px;top:124px;width:15px;height:8px;background:#cdcdcd;"></div>
<div style="left:1633px;top:148px;width:15px;height:535px;background:#cdcdcd;"></div>
<svg style="left:1636px;top:137px;" width="9" height="6" viewBox="0 0 9 6"><path d="M0.7 5L4.5 1.2L8.3 5" stroke="#505050" stroke-width="1.6" fill="none"/></svg>
<svg style="left:1636px;top:728px;" width="9" height="6" viewBox="0 0 9 6"><path d="M0.7 1L4.5 4.8L8.3 1" stroke="#505050" stroke-width="1.6" fill="none"/></svg>
<div style="left:221px;top:740px;width:1427px;height:16px;background:#f0f0f0;"></div>
<div style="left:222px;top:741px;width:8px;height:14px;background:#cdcdcd;"></div>
<div style="left:247px;top:741px;width:935px;height:14px;background:#cdcdcd;"></div>
<svg style="left:233px;top:743px;" width="6" height="9" viewBox="0 0 6 9"><path d="M5 0.7L1.2 4.5L5 8.3" stroke="#505050" stroke-width="1.6" fill="none"/></svg>
<svg style="left:1620px;top:743px;" width="6" height="9" viewBox="0 0 6 9"><path d="M1 0.7L4.8 4.5L1 8.3" stroke="#505050" stroke-width="1.6" fill="none"/></svg>
<div style="left:220px;top:762px;width:1431px;height:20px;background:#c1cfe0;border-top:1px solid #a4b0c4;"></div>
<span class="t" style="left:224px;top:765.00px;font-size:12px;line-height:16px;color:#1e1e1e;letter-spacing:0.328px;">Output</span>
<svg style="left:1620px;top:767px;" width="8" height="10" viewBox="0 0 8 10"><path d="M2.5 0.5H5.5V5.5H2.5Z" fill="#9aa3b2" stroke="#222" stroke-width="0.8"/><path d="M0.5 6H7.5" stroke="#111" stroke-width="1.3"/><path d="M4 6.5V9.5" stroke="#444" stroke-width="1"/></svg>
<svg style="left:1636px;top:767.5px;" width="10" height="10" viewBox="0 0 10 10"><path d="M1.7999999999999998 1.7999999999999998L8.2 8.2M8.2 1.7999999999999998L1.7999999999999998 8.2" stroke="#222" stroke-width="1.4" fill="none"/></svg>
<div style="left:220px;top:782px;width:1431px;height:26px;background:#f3f3f4;"></div>
<svg style="left:225.0px;top:787.0px;" width="16" height="16" viewBox="0 0 16 16"><circle cx="10.6" cy="8.6" r="3.3" fill="#f4f4f4" stroke="#8e8e8e" stroke-width="1.4"/><path d="M8.2 11L4.4 14.8" stroke="#8e8e8e" stroke-width="1.9" fill="none" /><path d="M2.6 3.6H7.4" stroke="#8e8e8e" stroke-width="1.7" fill="none" /><path d="M0.4 3.6L4 0.6V6.6Z" fill="#8e8e8e"/></svg>
<svg style="left:247.0px;top:787.0px;" width="16" height="16" viewBox="0 0 16 16"><circle cx="10.6" cy="8.6" r="3.3" fill="#f4f4f4" stroke="#8e8e8e" stroke-width="1.4"/><path d="M8.2 11L4.4 14.8" stroke="#8e8e8e" stroke-width="1.9" fill="none" /><path d="M0.6 3.6H5.2" stroke="#8e8e8e" stroke-width="1.7" fill="none" /><path d="M7.6 3.6L4 0.6V6.6Z" fill="#8e8e8e"/></svg>
<div style="left:268px;top:786px;width:1px;height:18px;background:#d6d6db;"></div>
<svg style="left:274.0px;top:787.0px;" width="16" height="16" viewBox="0 0 16 16"><path d="M6.4 4V1.6H10.4L13.4 4.6V11H10" stroke="#2a2a2a" stroke-width="1.2" fill="none" /><path d="M10 1.6V5H13.4Z" fill="#2a2a2a"/><rect x="2.6" y="5.6" width="6.4" height="9" fill="#fafafa" stroke="#2a2a2a" stroke-width="1.2"/></svg>
<svg style="left:297.0px;top:787.0px;" width="16" height="16" viewBox="0 0 16 16"><path d="M3 2.6L13.2 13.2" stroke="#b81a08" stroke-width="2.3" fill="none" /><path d="M13 2.6L3 13.4" stroke="#c8260f" stroke-width="1.9" fill="none" /></svg>
<div style="left:318px;top:786px;width:1px;height:18px;background:#d6d6db;"></div>
<svg style="left:324.0px;top:787.0px;" width="16" height="16" viewBox="0 0 16 16"><rect x="2" y="2" width="9" height="9" fill="none" stroke="#b4b4b4" stroke-width="1"/><rect x="5" y="5" width="9.4" height="9.4" fill="#f3f3f6" stroke="#a6a6a6" stroke-width="1"/><path d="M7.2 9.7H12.2M9.7 7.2V12.2" stroke="#a0a0a0" stroke-width="1" fill="none" /></svg>
<svg style="left:346.0px;top:787.0px;" width="16" height="16" viewBox="0 0 16 16"><rect x="2" y="2" width="9" height="9" fill="none" stroke="#b4b4b4" stroke-width="1"/><rect x="5" y="5" width="9.4" height="9.4" fill="#f3f3f6" stroke="#a6a6a6" stroke-width="1"/><path d="M7.2 9.7H12.2" stroke="#a0a0a0" stroke-width="1" fill="none" /></svg>
<div style="left:220px;top:808px;width:1431px;height:185px;background:#ffffff;border:1px solid #8e8e92;"></div>
<div style="left:220px;top:992px;width:1431px;height:26px;background:#eeeef1;"></div>
<div style="left:222px;top:995px;width:205px;height:21px;background:#e9e9ed;"></div>
<div style="left:498px;top:995px;width:244px;height:21px;background:#e9e9ed;"></div>
<div style="left:428px;top:993px;width:69px;height:25px;background:#fafafb;"></div>
<svg style="left:226.0px;top:997.0px;" width="16" height="16" viewBox="0 0 16 16"><rect x="1.6" y="2" width="12.8" height="12.4" fill="#fbfbfb" stroke="#3c3c3c" stroke-width="1.2"/><rect x="1.6" y="1.6" width="12.8" height="2.8" fill="#2e2e2e"/><path d="M2.6 13L6 6.4L9.4 13Z" fill="#f2c400"/><path d="M6 8.6V10.8M6 11.6V12.4" stroke="#333" stroke-width="0.9" fill="none" /><path d="M9.4 8.6L11 10.6L13.6 5.8" stroke="#222" stroke-width="1.3" fill="none" /></svg>
<span class="t" style="left:246px;top:997.50px;font-size:12px;line-height:16px;color:#1e1e1e;letter-spacing:-0.028px;">Problem Resolution [WebApp.src]</span>
<svg style="left:431.0px;top:997.0px;" width="16" height="16" viewBox="0 0 16 16"><path d="M8.4 1.8H2.6V14.2H8.4" stroke="#3c3c3c" stroke-width="1.2" fill="none" /><path d="M5.6 8H12.6" stroke="#1e1e1e" stroke-width="1.9" fill="none" /><path d="M9.6 4.2L13.6 8L9.6 11.8" stroke="#1e1e1e" stroke-width="1.9" fill="none" /></svg>
<span class="t" style="left:451px;top:998.00px;font-size:12px;line-height:16px;color:#1e1e1e;letter-spacing:0.328px;">Output</span>
<svg style="left:499.0px;top:997.0px;" width="16" height="16" viewBox="0 0 16 16"><path d="M5.4 3.4H3V14.6H12.6V3.4H10.2" stroke="#3c3c3c" stroke-width="1.2" fill="none" /><path d="M5.6 4.6V2.4H6.8Q7.8 0.4 8.8 2.4H10V4.6Z" stroke="#3c3c3c" stroke-width="1" fill="none" /><path d="M5.2 9.4L7.4 12L11.4 5.8" stroke="#1e1e1e" stroke-width="1.5" fill="none" /></svg>
<span class="t" style="left:519px;top:997.50px;font-size:12px;line-height:16px;color:#1e1e1e;letter-spacing:-0.065px;">To Do List [WebApp.src]</span>
<svg style="left:654.0px;top:997.0px;" width="16" height="16" viewBox="0 0 16 16"><path d="M5.6 6V1.6H10.6L13.8 4.8V14.2H9.6" stroke="#3c3c3c" stroke-width="1.2" fill="none" /><path d="M10.4 1.6V5H13.8Z" fill="#3c3c3c"/><circle cx="6" cy="10" r="2.5" fill="#e8f0fa" stroke="#2a6cc0" stroke-width="1.4"/><path d="M4.2 12L1.2 15" stroke="#2a6cc0" stroke-width="1.8" fill="none" /></svg>
<span class="t" style="left:674px;top:997.50px;font-size:12px;line-height:16px;color:#1e1e1e;letter-spacing:-0.309px;">Find Results</span>
<div style="left:427px;top:996px;width:1px;height:19px;background:#d6d6db;"></div>
<div style="left:497px;top:996px;width:1px;height:19px;background:#d6d6db;"></div>
<div style="left:650px;top:996px;width:1px;height:19px;background:#d6d6db;"></div>
<div style="left:741px;top:996px;width:1px;height:19px;background:#d6d6db;"></div>
<div style="left:1655px;top:101px;width:264px;height:20px;background:#c1cfe0;border-top:1px solid #a4b0c4;border-right:1px solid #a4b0c4;"></div>
<span class="t" style="left:1659px;top:103.50px;font-size:12px;line-height:16px;color:#1e1e1e;letter-spacing:-0.268px;">Workspace Explorer</span>
<svg style="left:1889px;top:106.0px;" width="8" height="10" viewBox="0 0 8 10"><path d="M2.5 0.5H5.5V5.5H2.5Z" fill="#9aa3b2" stroke="#222" stroke-width="0.8"/><path d="M0.5 6H7.5" stroke="#111" stroke-width="1.3"/><path d="M4 6.5V9.5" stroke="#444" stroke-width="1"/></svg>
<svg style="left:1906px;top:106.5px;" width="10" height="10" viewBox="0 0 10 10"><path d="M1.7999999999999998 1.7999999999999998L8.2 8.2M8.2 1.7999999999999998L1.7999999999999998 8.2" stroke="#222" stroke-width="1.4" fill="none"/></svg>
<span class="t" style="left:1660px;top:130.00px;font-size:12px;line-height:16px;color:#1e1e1e;letter-spacing:-0.127px;">Current Project:</span>
<div style="left:1750px;top:126px;width:168px;height:24px;background:#e4e4e6;border:1px solid #bdbdc2;"></div>
<span class="t" style="left:1755px;top:130.00px;font-size:12px;line-height:16px;color:#1e1e1e;letter-spacing:-0.114px;">WebApp.src</span>
<svg style="left:1904px;top:135px;" width="10" height="6" viewBox="0 0 10 6"><path d="M0.7 0.7L5 5L9.3 0.7" stroke="#444" stroke-width="1.2" fill="none"/></svg>
<div style="left:1655px;top:154px;width:264px;height:310px;background:#ffffff;border:1px solid #9a9aa0;border-top-color:#6f6f75;"></div>
<svg style="left:1664px;top:162px;" width="9" height="9" viewBox="0 0 9 9"><rect x="0.5" y="0.5" width="8" height="8" fill="#fff" stroke="#a8a8b4"/><path d="M9.5 4.5H12" stroke="#b0b0b8" stroke-width="1" stroke-dasharray="1 1"/><path d="M2.5 4.5H6.5M4.5 2.5V6.5" stroke="#3a4a8a" stroke-width="1"/></svg>
<svg style="left:1676.0px;top:157.0px;" width="16" height="16" viewBox="0 0 16 16"><rect x="2.4" y="1.6" width="11.6" height="9.8" fill="#fbfbfb" stroke="#4a4a4a" stroke-width="1"/><rect x="2.4" y="1.4" width="11.6" height="2.4" fill="#2a2a2a"/><rect x="10.6" y="9.6" width="1.6" height="2.6" fill="#fbfbfb"/><circle cx="4.8" cy="11.2" r="3.7" fill="#ffffff" stroke="#161616" stroke-width="1.2"/><path d="M1.4 10H8.2M1.2 11.3H8.4M1.5 12.6H8.1" stroke="#161616" stroke-width="0.9" fill="none" /><path d="M4.8 7.6V14.8" stroke="#444" stroke-width="0.6" fill="none" /></svg>
<div style="left:1695px;top:157px;width:68px;height:17px;background:#ececec;"></div>
<span class="t" style="left:1697px;top:157.00px;font-size:12px;line-height:16px;color:#1e1e1e;letter-spacing:-0.114px;">WebApp.src</span>
<div style="left:1655px;top:468px;width:264px;height:20px;background:#c1cfe0;border-top:1px solid #a4b0c4;border-right:1px solid #a4b0c4;"></div>
<span class="t" style="left:1659px;top:470.50px;font-size:12px;line-height:16px;color:#1e1e1e;letter-spacing:-0.161px;">Properties (Inactive)</span>
<svg style="left:1889px;top:473.0px;" width="8" height="10" viewBox="0 0 8 10"><path d="M2.5 0.5H5.5V5.5H2.5Z" fill="#9aa3b2" stroke="#222" stroke-width="0.8"/><path d="M0.5 6H7.5" stroke="#111" stroke-width="1.3"/><path d="M4 6.5V9.5" stroke="#444" stroke-width="1"/></svg>
<svg style="left:1906px;top:473.5px;" width="10" height="10" viewBox="0 0 10 10"><path d="M1.7999999999999998 1.7999999999999998L8.2 8.2M8.2 1.7999999999999998L1.7999999999999998 8.2" stroke="#222" stroke-width="1.4" fill="none"/></svg>
<div style="left:1655px;top:488px;width:264px;height:505px;background:#efeff1;"></div>
<div style="left:1697.5px;top:495.5px;width:215.5px;height:23px;background:#f1f1f3;border:1px solid #dadade;"></div>
<div style="left:1697.5px;top:527.5px;width:215.5px;height:23px;background:#f1f1f3;border:1px solid #dadade;"></div>
<div style="left:1656px;top:566px;width:260px;height:428px;background:#efefef;border:1px solid #e2e2e6;"></div>
<span class="t" style="left:1738px;top:575.00px;font-size:12px;line-height:16px;color:#1e1e1e;font-weight:bold;">Nothing to Model</span>
<span class="t" style="left:1665px;top:605.00px;font-size:12px;line-height:16px;color:#1e1e1e;letter-spacing:-0.100px;">No object, class or table is currently selected.</span>
<span class="t" style="left:1665px;top:635.00px;font-size:12px;line-height:16px;color:#1e1e1e;letter-spacing:0.062px;">Hint:</span>
<span class="t" style="left:1665.5px;top:655.70px;font-size:15px;line-height:19px;color:#1e1e1e;">•</span>
<span class="t" style="left:1674px;top:658.00px;font-size:12px;line-height:16px;color:#1e1e1e;letter-spacing:-0.240px;">Select an object or a class via <span style="color:#1a6ec0;text-decoration:underline">Code Explorer</span></span>
<span class="t" style="left:1674px;top:673.00px;font-size:12px;line-height:16px;color:#1e1e1e;letter-spacing:-0.106px;">or the Visual Designer to view its properties.</span>
<span class="t" style="left:1665.5px;top:693.70px;font-size:15px;line-height:19px;color:#1e1e1e;">•</span>
<span class="t" style="left:1674px;top:696.00px;font-size:12px;line-height:16px;color:#1e1e1e;letter-spacing:-0.040px;">In the Code Editor position the cursor inside</span>
<span class="t" style="left:1674px;top:711.00px;font-size:12px;line-height:16px;color:#1e1e1e;letter-spacing:-0.154px;">an object or a class declaration and press</span>
<span class="t" style="left:1674px;top:726.00px;font-size:12px;line-height:16px;color:#1e1e1e;letter-spacing:-0.127px;">Ctrl+F7.</span>
<span class="t" style="left:1665.5px;top:746.70px;font-size:15px;line-height:19px;color:#1e1e1e;">•</span>
<span class="t" style="left:1674px;top:749.00px;font-size:12px;line-height:16px;color:#1e1e1e;letter-spacing:-0.142px;">Select a Table via <span style="color:#1a6ec0;text-decoration:underline">Table Explorer</span> or the Table</span>
<span class="t" style="left:1674px;top:764.00px;font-size:12px;line-height:16px;color:#1e1e1e;">Editor to view its attribute properties.</span>
<div style="left:1655px;top:993px;width:265px;height:25px;background:#eeeef1;"></div>
<div style="left:1788px;top:995px;width:124px;height:21px;background:#e9e9ed;"></div>
<div style="left:1656px;top:993px;width:131px;height:25px;background:#fafafb;"></div>
<svg style="left:1660.0px;top:997.0px;" width="16" height="16" viewBox="0 0 16 16"><rect x="4.4" y="1.6" width="10.6" height="12.4" fill="#fafafa" stroke="#3c3c3c" stroke-width="1.1"/><path d="M4.4 4.6H15M4.4 7.6H15M4.4 10.6H15M8 1.6V14M11.6 1.6V14" stroke="#3c3c3c" stroke-width="0.9" fill="none" /><rect x="4.4" y="1.4" width="10.6" height="1.6" fill="#3c3c3c"/><path d="M0.6 8.6H4.6V13.4L3.4 12.2L2.2 15L1.2 14.6L2.2 12H0.6Z" fill="#222"/></svg>
<span class="t" style="left:1679px;top:997.50px;font-size:12px;line-height:16px;color:#1e1e1e;letter-spacing:-0.083px;">Properties (Inactiv...</span>
<svg style="left:1790.0px;top:997.0px;" width="16" height="16" viewBox="0 0 16 16"><path d="M8 2.5A3.5 1.5 0 0 1 15 2.5V7.9A3.5 1.5 0 0 1 8 7.9Z" fill="#2e2e2e"/><ellipse cx="11.5" cy="2.5" rx="2.8" ry="0.9" fill="#9a9a9a"/><rect x="4.6" y="6" width="3" height="2.6" fill="#3c3c3c"/><path d="M6 8.6V10.6M2.4 12.6V10.6H9.8V12.6" stroke="#3c3c3c" stroke-width="1" fill="none" /><rect x="1" y="12.2" width="2.8" height="2.6" fill="#3c3c3c"/><rect x="4.6" y="12.2" width="2.8" height="2.6" fill="#3c3c3c"/><rect x="8.4" y="12.2" width="2.8" height="2.6" fill="#3c3c3c"/></svg>
<span class="t" style="left:1809px;top:997.00px;font-size:12px;line-height:16px;color:#1e1e1e;letter-spacing:-0.353px;">DDO Explorer [Da...</span>
<div style="left:0px;top:1018px;width:1920px;height:22px;background:#0279d6;"></div>
<span class="t" style="left:3px;top:1021.50px;font-size:12px;line-height:16px;color:#ffffff;letter-spacing:-0.102px;">C:\Data\DataFlex Workspaces\DFLC\DflcPdfViewer\AppSrc\Dashboard.wo</span>
<span class="t" style="left:1537px;top:1021.50px;font-size:12px;line-height:16px;color:#ffffff;letter-spacing:-0.406px;">Ln 31</span>
<span class="t" style="left:1577px;top:1021.50px;font-size:12px;line-height:16px;color:#ffffff;letter-spacing:-0.203px;">Col 5</span>
<svg style="left:1689.8px;top:1021.0px;" width="18" height="18" viewBox="0 0 18 18"><circle cx="9" cy="9" r="8.2" fill="#dcecf8"/><circle cx="9" cy="9" r="7.1" fill="#fdeae6" stroke="#cc5a48" stroke-width="1.3"/><path d="M9 4.4V10.6" stroke="#b8300f" stroke-width="2" fill="none" /><circle cx="9" cy="13" r="1.2" fill="#b8300f"/></svg>
<svg style="left:1758.2px;top:1021.0px;" width="18" height="18" viewBox="0 0 18 18"><circle cx="9" cy="9" r="8.5" fill="#f2f7fc"/><circle cx="9" cy="9" r="6.5" fill="#ffffff" stroke="#7c7c7c" stroke-width="1.6"/><path d="M4.6 4.9L13.4 13.1" stroke="#7c7c7c" stroke-width="1.9" fill="none" /></svg>
<span class="t" style="left:1793px;top:1021.50px;font-size:12px;line-height:16px;color:#ffffff;letter-spacing:-0.339px;">INS</span>
<span class="t" style="left:1837px;top:1021.50px;font-size:12px;line-height:16px;color:#6fb4e6;letter-spacing:-0.922px;">CAPS</span>
<span class="t" style="left:1881px;top:1021.50px;font-size:12px;line-height:16px;color:#ffffff;letter-spacing:0.224px;">NUM</span>
<div style="left:0px;top:1040px;width:1920px;height:40px;background:#11110e;"></div>
<svg style="left:15px;top:1051px;" width="18" height="18" viewBox="0 0 18 18"><path d="M0 2.6L7.6 1.5V8.6H0ZM8.6 1.4L18 0V8.6H8.6ZM0 9.6H7.6V16.6L0 15.5ZM8.6 9.6H18V18L8.6 16.7Z" fill="#ffffff"/></svg>
<svg style="left:63px;top:1051px;" width="18" height="18" viewBox="0 0 18 18"><circle cx="11" cy="7" r="5.4" fill="none" stroke="#fff" stroke-width="1.7"/><path d="M7.2 10.8L1 17" stroke="#fff" stroke-width="1.9" fill="none" /></svg>
<svg style="left:109px;top:1051px;" width="20" height="18" viewBox="0 0 20 18"><rect x="1" y="4" width="11" height="9.4" fill="none" stroke="#fff" stroke-width="1.6"/><path d="M1 1H12M1 16.6H12" stroke="#fff" stroke-width="1.6" fill="none" /><path d="M15.6 1V5M15.6 7.4V12.4M15.6 14.6V17" stroke="#fff" stroke-width="1.9" fill="none" /></svg>
<svg style="left:158px;top:1049px;" width="24" height="22" viewBox="0 0 24 22"><path d="M1 1.6H9L10.6 3.6H23V19.6H1Z" fill="#f0c55a"/><path d="M1 5.4H23V19.6H1Z" fill="#fbe39a"/><path d="M5.4 11H18.6V19.6H5.4Z" fill="#3a9ee2"/><path d="M8.4 14.4H15.6V19.6H8.4Z" fill="#fbe39a"/><path d="M5.4 11H18.6V12.6H5.4Z" fill="#2b8ad0"/></svg>
<svg style="left:207px;top:1048px;" width="26" height="24" viewBox="0 0 26 24"><rect x="9" y="1.4" width="16" height="18" fill="#2a8fe0"/><path d="M17 1.4H25V10H17Z" fill="#3fb4f2"/><path d="M9 10.4L25 21.6V23H9Z" fill="#1766b8"/><path d="M25 10.4L11 22.6H25Z" fill="#5db2ec"/><rect x="1" y="5.4" width="14" height="14" fill="#0b63b6" rx="1.2"/><text x="8" y="16.6" font-size="11.5" font-weight="bold" text-anchor="middle" fill="#fff" font-family="Liberation Sans,sans-serif">O</text></svg>
<svg style="left:257px;top:1048px;" width="24" height="24" viewBox="0 0 24 24"><circle cx="12" cy="12" r="11.4" fill="#de4a3c"/><path d="M12 12L2.1 6.3A11.4 11.4 0 0 0 10 23.2L15 16Z" fill="#2c9f4f"/><path d="M12 12L15.5 17.4L10.4 23.3A11.4 11.4 0 0 0 23 8.4H13Z" fill="#f8cd3e"/><circle cx="12" cy="12" r="5.4" fill="#f4f4f4"/><circle cx="12" cy="12" r="4.3" fill="#4c8bf0"/></svg>
<svg style="left:308px;top:1051px;" width="20" height="18" viewBox="0 0 20 18"><path d="M0 0H20V18H0Z" fill="#fbdc12"/><path d="M10 9.6H19V10.4L10.6 16.2H10Z" fill="#15150c"/></svg>
<svg style="left:354px;top:1049px;" width="25" height="22" viewBox="0 0 25 22"><rect x="9" y="1" width="15" height="20" fill="#fafafa" stroke="#c8d4e8" stroke-width="0.8"/><path d="M15.4 5.4H22M15.4 8.6H22M15.4 11.8H22M15.4 15H22" stroke="#6a86c0" stroke-width="1.3" fill="none" /><path d="M1 3.2L14 1V21L1 18.8Z" fill="#2a56a0"/><text x="7.4" y="15" font-size="10" font-weight="bold" text-anchor="middle" fill="#fff" font-family="Liberation Sans,sans-serif">W</text></svg>
<svg style="left:403px;top:1049px;" width="24" height="24" viewBox="0 0 24 24"><path d="M8.4 1L22.6 2.6L19 21L1.6 16.6Z" fill="#d6eef2"/><path d="M8.4 1L22.6 2.6L21.8 6L7 4Z" fill="#9fd0dc"/><path d="M1.6 16.6L19 21L18.4 23L2.4 19.4Z" fill="#b8b8a8"/><path d="M19 21L22.6 2.6L24 8L20.6 22Z" fill="#e8e4c0"/><path d="M8.4 1L1.6 16.6" stroke="#f4fbfc" stroke-width="1.2" fill="none" /><path d="M8 6L18 8L16 17L5 14Z" fill="#b8dee6"/></svg>
<div style="left:151px;top:1078px;width:40px;height:2px;background:#84b9e6;"></div>
<div style="left:298px;top:1078px;width:40px;height:2px;background:#84b9e6;"></div>
<div style="left:347px;top:1078px;width:40px;height:2px;background:#84b9e6;"></div>
<div style="left:395px;top:1078px;width:41px;height:2px;background:#84b9e6;"></div>
</body></html>
